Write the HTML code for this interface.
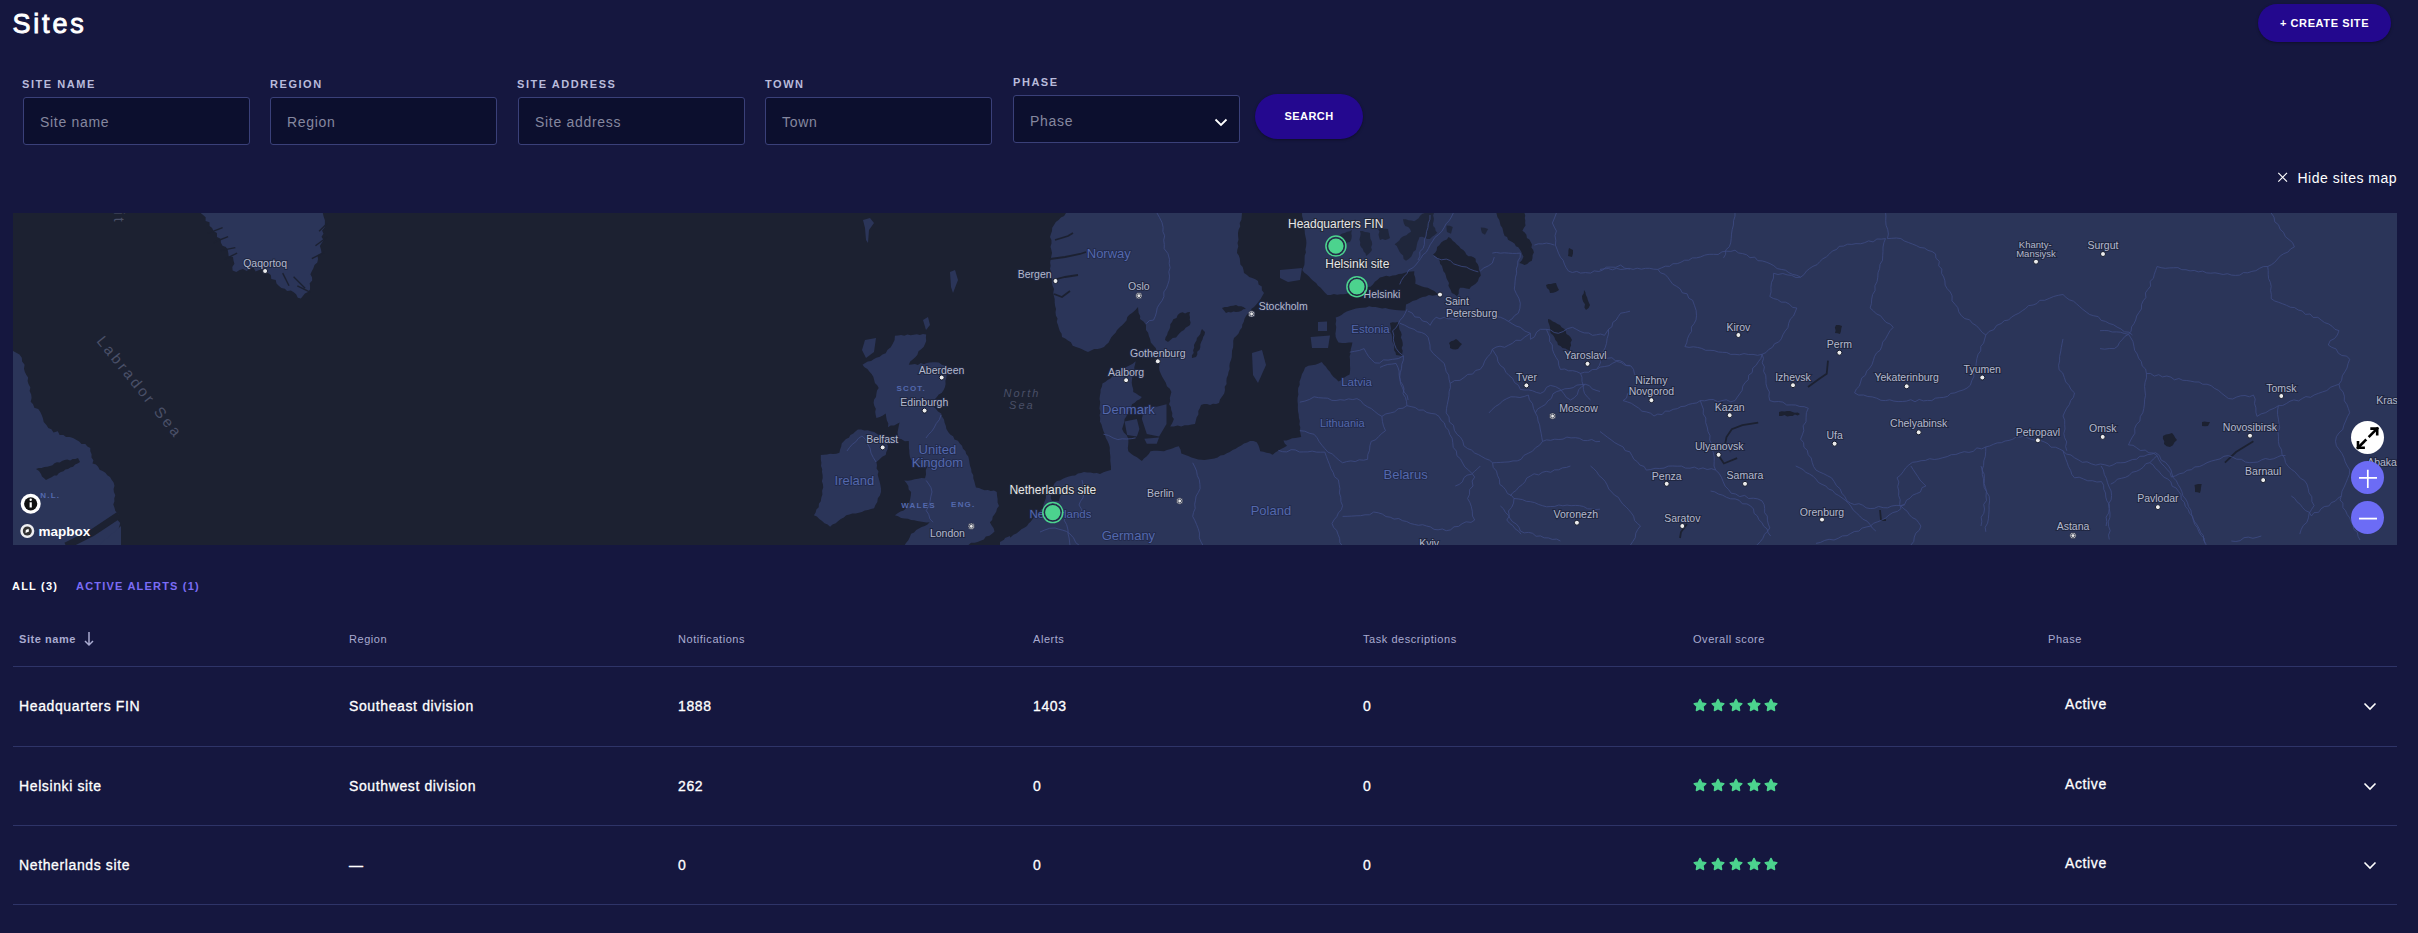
<!DOCTYPE html>
<html><head><meta charset="utf-8">
<style>
*{box-sizing:border-box;margin:0;padding:0}
html,body{width:2418px;height:933px;overflow:hidden;background:#15173f;font-family:"Liberation Sans",sans-serif;color:#fff}
.abs{position:absolute}
h1{position:absolute;left:12.5px;top:8.5px;font-size:27px;font-weight:normal;-webkit-text-stroke:0.9px #fff;letter-spacing:2.8px;color:#fff}
.create{position:absolute;left:2258px;top:4px;width:133px;height:38px;border-radius:19px;background:#23088e;color:#fff;font-size:11px;font-weight:bold;letter-spacing:0.6px;text-align:center;line-height:38px;box-shadow:0 1px 3px rgba(0,0,0,.35)}
.lbl{position:absolute;font-size:11px;font-weight:bold;letter-spacing:1.55px;color:#b9bbdb;top:78px}
.inp{position:absolute;top:97px;width:227px;height:48px;border:1px solid #3a4079;border-radius:3px;background:#0c0f2e;color:#85879f;font-size:14px;letter-spacing:0.7px;padding-left:16px;padding-top:1px;line-height:46px}
.search{position:absolute;left:1255px;top:94px;width:108px;height:45px;border-radius:23px;background:#24088f;color:#fff;font-size:11px;font-weight:bold;letter-spacing:0.45px;text-align:center;line-height:45px;box-shadow:0 1px 3px rgba(0,0,0,.35)}
.hide{position:absolute;left:2297.5px;top:169.5px;font-size:14px;letter-spacing:0.5px;color:#fff}
.map{position:absolute;left:13px;top:213px;width:2384px;height:332px;background:#1c2131;overflow:hidden}
.tab{position:absolute;top:580px;font-size:11px;font-weight:bold;letter-spacing:1.2px}
.th{position:absolute;top:633px;font-size:11px;color:#a9abd0;letter-spacing:0.55px}
.hr{position:absolute;left:13px;width:2384px;height:1px;background:#2e3468}
.mapsvg{position:absolute;left:0;top:0}
.city{font-size:10.5px;fill:#b4b9cd;text-anchor:middle}
.city.sm{font-size:9.5px}
.ctry{fill:#5469ad;text-anchor:middle}
.reg{font-size:8px;font-weight:bold;letter-spacing:1.2px;fill:#5469ad;text-anchor:middle}
.sea{font-size:11px;font-style:italic;letter-spacing:2px;fill:#4a5068;text-anchor:middle}
.sea.big{font-size:15px;font-style:normal;letter-spacing:3px}
.mk{font-size:12px;fill:#e6e6e6;text-anchor:middle}
.stars{position:absolute;display:flex}
.chev{position:absolute}
.td{position:absolute;font-size:14px;color:#fff;letter-spacing:0.62px;margin-top:1.3px;-webkit-text-stroke:0.3px #fff}
</style></head><body>
<h1>Sites</h1>
<div class="create">+ CREATE SITE</div>

<div class="lbl" style="left:22px">SITE NAME</div>
<div class="lbl" style="left:270px">REGION</div>
<div class="lbl" style="left:517px">SITE ADDRESS</div>
<div class="lbl" style="left:765px">TOWN</div>
<div class="lbl" style="left:1013px;top:76px">PHASE</div>
<div class="inp" style="left:23px">Site name</div>
<div class="inp" style="left:270px">Region</div>
<div class="inp" style="left:518px">Site address</div>
<div class="inp" style="left:765px">Town</div>
<div class="inp" style="left:1013px;top:95px;padding-top:2px">Phase</div>
<svg class="chev" style="left:1214px;top:117.5px" width="14" height="9" viewBox="0 0 14 9"><path d="M1.5 1.5 L7 7 L12.5 1.5" fill="none" stroke="#fff" stroke-width="1.8"/></svg>
<div class="search">SEARCH</div>

<svg class="chev" style="left:2276px;top:171px" width="12" height="12" viewBox="0 0 12 12"><path d="M2.3 1.9 L11 10.6 M11 1.9 L2.3 10.6" stroke="#fff" stroke-width="1.15"/></svg>
<div class="hide">Hide sites map</div>

<div class="map"></div>
<svg class="mapsvg" width="2418" height="933" viewBox="0 0 2418 933">
<defs><clipPath id="mc"><rect x="13" y="213" width="2384" height="332"/></clipPath></defs>
<g clip-path="url(#mc)">
<rect x="13" y="213" width="2384" height="332" fill="#1c2131"/>
<polygon points="200.7,213.0 203.1,215.1 205.6,217.3 205.6,221.1 209.5,222.2 209.6,225.9 212.1,228.1 213.4,231.0 216.9,232.9 217.0,236.9 220.6,238.8 220.9,242.7 222.5,245.8 225.8,247.1 227.6,249.6 228.3,252.9 228.7,256.4 233.0,257.0 233.5,260.4 234.4,263.8 232.3,267.0 232.6,270.4 236.3,272.0 239.6,270.0 242.9,268.9 246.7,271.0 249.9,268.6 253.4,267.4 255.6,271.6 259.2,269.9 262.3,270.0 265.4,270.6 268.0,273.0 270.8,275.1 271.3,279.1 275.7,279.9 276.5,283.6 279.0,286.0 281.4,288.1 284.8,288.7 287.1,290.9 290.9,290.6 293.7,292.2 296.1,294.3 297.8,297.7 300.9,298.6 302.9,296.1 304.9,293.5 308.0,292.0 310.0,289.5 310.1,286.4 309.7,283.3 312.2,280.5 312.1,277.5 310.4,274.2 311.8,271.3 313.4,268.3 314.5,265.1 317.3,262.6 318.0,259.2 317.5,255.3 321.6,253.3 321.0,249.4 319.9,246.0 321.7,243.1 323.7,240.2 321.5,236.7 323.5,233.8 322.1,230.4 324.6,227.6 324.9,223.9 324.9,220.2 323.6,216.6 322.8,213.0 200.7,213.0" fill="#2b3559"/>
<polygon points="13.0,351.0 16.3,352.8 19.5,354.6 21.8,357.7 22.1,361.5 24.6,364.8 24.0,368.7 24.8,371.8 26.2,374.7 28.1,377.5 27.6,380.9 28.5,384.0 30.4,387.4 29.6,391.1 31.2,394.5 31.6,398.1 30.7,401.8 33.1,404.3 34.3,407.7 38.2,408.9 40.2,411.8 41.7,415.0 43.0,418.4 43.7,422.1 46.4,424.9 48.3,428.0 51.4,429.2 53.5,432.4 57.8,431.2 59.6,435.0 63.4,434.9 66.0,437.0 69.7,437.0 73.0,438.1 76.1,439.8 79.2,441.5 81.5,444.0 85.3,443.9 87.4,446.6 90.3,448.0 90.3,451.2 91.6,454.2 91.5,457.4 93.4,460.3 92.5,463.6 95.9,464.4 98.1,466.7 99.6,469.8 102.6,471.1 105.4,472.7 107.3,475.3 110.0,477.0 111.6,479.8 113.6,482.5 114.5,485.7 113.6,488.9 113.9,492.0 115.3,495.2 114.3,498.3 114.4,501.5 113.3,504.6 114.5,507.8 115.3,511.1 118.1,513.4 119.0,516.6 117.5,519.9 120.2,523.1 119.3,526.4 118.2,529.7 120.1,532.9 119.0,536.2 120.5,539.5 118.5,542.7 119.0,546.0 13.0,546.0 13.0,351.0" fill="#2b3559"/>
<polygon points="894.9,335.8 898.0,335.4 901.1,334.9 904.3,335.7 907.4,334.6 910.6,335.3 913.7,334.8 916.8,334.2 919.9,334.9 923.0,333.9 926.2,334.6 925.9,337.7 926.2,340.9 925.0,343.9 923.6,347.0 921.1,349.2 918.5,351.3 917.4,354.7 915.3,357.2 912.7,359.4 910.2,361.6 908.8,364.7 911.8,364.6 914.8,364.1 917.9,364.9 920.8,363.0 923.9,364.2 926.8,362.9 929.8,362.5 932.8,362.2 935.9,362.3 938.9,362.4 941.7,364.8 945.4,365.8 948.2,368.2 947.4,371.3 946.6,374.4 946.4,377.7 945.4,380.8 945.6,384.1 944.9,387.2 943.5,390.2 941.6,392.9 938.7,394.6 936.7,397.2 934.5,399.6 931.9,401.6 929.7,404.0 932.6,406.3 935.7,408.4 938.0,411.5 941.2,413.4 942.0,416.6 944.0,419.4 944.6,422.7 945.8,425.7 946.4,429.1 948.2,431.9 950.2,434.5 953.1,436.3 954.5,439.5 957.9,440.7 959.8,443.4 962.0,445.8 963.0,448.8 965.4,451.1 966.2,454.1 968.3,456.5 969.0,459.7 969.5,462.9 970.1,466.0 971.2,469.0 971.5,472.2 973.2,475.0 973.3,478.3 974.3,481.3 975.1,484.4 976.0,487.4 979.0,488.0 981.8,489.3 984.7,490.2 987.9,490.0 990.8,491.0 994.0,490.6 996.8,492.0 997.0,495.6 997.6,499.0 997.6,502.6 999.0,506.0 997.0,508.4 996.3,511.6 994.6,514.2 992.7,516.7 992.2,519.9 989.9,522.2 991.5,525.2 993.5,528.1 994.5,531.4 992.1,533.8 989.4,535.8 985.9,536.6 983.8,539.4 980.6,540.7 977.6,542.0 974.5,542.7 971.1,542.7 968.4,545.0 965.1,545.2 962.0,546.0 904.2,546.0 906.0,543.0 908.3,540.2 909.9,537.1 911.1,533.7 914.1,532.6 916.2,530.1 919.0,528.6 921.6,526.9 924.7,526.1 927.5,524.5 929.7,522.2 926.5,522.4 923.4,522.0 920.3,521.5 917.2,521.1 914.2,520.3 911.1,519.9 907.9,518.8 904.5,518.4 901.1,517.9 898.1,516.3 894.9,515.2 897.6,513.2 900.5,511.6 903.7,510.4 906.2,508.1 908.8,506.0 909.4,502.5 910.2,499.0 910.8,495.6 911.1,492.0 908.7,489.5 908.3,485.9 906.4,483.1 904.2,480.5 907.7,480.8 911.2,480.3 914.6,479.2 918.0,478.8 921.5,477.9 925.0,478.2 926.0,474.4 925.8,470.3 927.3,466.6 923.8,465.9 920.6,464.3 917.3,463.0 914.2,461.3 911.1,459.7 909.9,456.7 909.4,453.6 909.3,450.5 908.9,447.4 908.9,444.2 908.8,441.1 904.8,441.2 901.2,438.9 897.2,438.8 897.9,435.6 897.5,432.2 898.2,429.0 898.8,425.8 899.6,422.6 896.8,424.0 894.1,425.5 890.7,425.5 888.0,427.2 888.3,423.6 886.8,420.3 886.2,416.9 885.7,413.4 882.9,415.6 879.8,417.1 876.4,418.0 875.7,415.0 875.2,411.9 875.8,408.7 874.3,405.7 873.6,402.7 874.1,399.5 876.0,396.9 876.4,393.7 877.0,390.6 878.7,387.9 877.2,385.2 874.9,382.9 874.1,379.8 873.3,376.7 871.6,374.1 869.5,371.7 867.4,369.1 864.5,367.3 862.5,364.7 865.2,363.1 867.8,361.4 871.1,361.0 873.6,359.2 876.4,357.8 879.7,356.7 882.5,354.5 885.7,353.2 887.6,349.8 890.8,347.3 892.6,343.9 894.6,340.1 894.9,335.8" fill="#2b3559"/>
<polygon points="865.0,340.0 876.0,338.0 874.0,352.0 866.0,358.0 862.0,350.0" fill="#2b3559"/>
<polygon points="841.7,443.4 843.8,441.2 846.0,439.0 848.8,437.7 850.5,435.0 853.3,433.6 855.4,431.4 857.9,429.6 861.2,429.4 864.4,430.5 867.7,430.2 870.9,431.3 874.1,431.9 876.9,433.7 879.2,436.1 881.1,438.8 883.0,441.5 886.1,443.1 888.0,445.8 887.7,449.0 886.3,451.9 885.7,455.0 882.2,456.8 879.4,459.6 876.4,462.0 877.0,465.2 876.6,468.6 878.5,471.6 877.7,475.0 878.7,478.2 879.6,481.6 880.4,485.0 881.0,488.4 881.0,492.0 879.9,495.4 877.8,498.3 877.3,502.0 875.4,505.0 874.1,508.3 871.0,508.9 868.0,510.0 864.8,510.5 861.9,512.0 858.8,512.8 855.7,513.4 852.4,513.4 849.4,514.5 846.3,515.2 843.8,517.4 840.8,519.0 838.2,521.1 835.7,523.2 832.5,524.5 830.1,526.8 827.6,524.6 824.5,523.3 822.1,520.9 819.3,519.0 816.9,516.6 813.9,515.2 815.6,512.6 816.4,509.5 818.7,507.2 818.9,503.8 820.8,501.3 821.3,497.8 822.4,494.4 822.1,490.8 823.2,487.4 822.9,484.3 821.9,481.3 822.7,478.1 822.6,475.1 822.0,472.0 822.2,468.9 821.0,465.9 821.4,462.8 820.8,459.7 820.8,455.0 823.9,454.8 827.0,454.4 830.1,453.8 833.3,454.0 836.4,453.8 839.4,452.7 840.1,449.6 841.2,446.6 841.7,443.4" fill="#2b3559"/>
<polygon points="98.0,546.0 121.0,526.0 121.0,546.0" fill="#2b3559"/>
<polygon points="863.0,220.0 870.0,218.0 874.0,223.0 869.0,230.0 868.0,243.0 866.0,240.0 865.0,228.0" fill="#2b3559"/>
<polygon points="950.0,272.0 955.0,270.0 958.0,280.0 953.0,293.0 951.0,287.0" fill="#2b3559"/>
<polygon points="923.0,320.0 928.0,317.0 930.0,325.0 926.0,330.0" fill="#2b3559"/>
<polygon points="1001.0,546.0 1005.0,538.0 1010.0,536.0 1010.0,546.0" fill="#2b3559"/>
<polygon points="1066.0,213.0 1242.0,213.0 1241.7,216.4 1241.4,219.8 1239.7,222.9 1240.2,226.5 1238.6,229.7 1238.0,233.0 1238.1,236.3 1238.5,239.7 1237.5,243.0 1238.3,246.4 1237.3,249.7 1237.0,253.0 1238.8,255.6 1239.8,258.4 1240.1,261.5 1240.4,264.6 1242.7,267.0 1243.5,270.0 1244.0,273.0 1246.7,274.8 1249.2,277.0 1252.3,277.9 1255.3,279.2 1258.0,281.0 1258.6,284.4 1261.8,286.6 1261.9,290.3 1264.0,293.0 1262.3,296.0 1260.6,299.0 1258.6,301.8 1256.3,304.4 1254.0,307.0 1251.5,308.8 1250.5,311.9 1247.9,313.6 1246.0,316.0 1244.5,318.7 1243.8,321.7 1242.3,324.4 1242.0,327.5 1240.0,330.0 1238.7,333.2 1236.5,335.7 1234.0,338.0 1233.2,341.1 1233.3,344.3 1233.1,347.5 1232.1,350.5 1231.9,353.7 1231.8,356.9 1231.0,360.0 1229.8,362.9 1229.4,365.9 1229.7,369.1 1228.5,372.0 1228.0,375.0 1226.7,377.9 1226.4,380.9 1226.6,384.1 1224.7,386.8 1225.0,390.0 1224.2,393.6 1222.1,396.6 1220.0,399.5 1219.0,403.0 1216.1,404.0 1213.0,403.7 1210.1,404.9 1207.0,404.0 1203.9,404.1 1201.0,405.0 1199.9,408.1 1198.3,411.1 1198.4,414.6 1196.6,417.5 1195.8,420.8 1195.0,424.0 1191.5,424.5 1188.2,425.3 1184.6,425.2 1181.3,426.5 1177.6,425.6 1173.9,426.6 1170.2,426.5 1172.3,422.9 1173.9,419.1 1172.1,416.4 1172.3,413.1 1171.2,410.1 1170.9,407.0 1169.0,404.3 1170.2,401.3 1169.8,398.1 1170.6,395.0 1171.4,392.0 1169.8,388.8 1166.9,386.3 1165.8,382.8 1164.0,379.7 1162.2,376.8 1160.8,373.8 1159.5,370.7 1159.1,367.3 1159.6,364.2 1158.4,361.1 1158.6,358.1 1159.1,355.0 1156.9,351.8 1155.7,347.9 1153.0,345.0 1150.8,342.4 1150.1,339.0 1148.9,336.0 1148.1,332.7 1146.0,330.0 1146.0,325.0 1143.5,321.5 1140.0,319.0 1140.2,315.9 1138.6,313.1 1138.3,310.0 1138.0,307.0 1135.2,310.2 1132.0,313.0 1129.4,314.8 1127.3,317.1 1126.5,320.5 1124.5,322.8 1122.4,325.0 1120.0,327.0 1117.0,330.0 1115.6,332.8 1113.3,334.9 1111.3,337.2 1109.9,340.0 1108.5,342.7 1106.0,344.7 1104.0,347.0 1100.9,348.2 1097.6,348.9 1094.1,349.1 1091.1,350.6 1088.0,352.0 1085.0,350.7 1082.1,349.3 1079.1,347.9 1076.0,347.0 1072.7,345.7 1070.9,342.3 1067.9,340.5 1065.2,338.4 1062.0,337.0 1061.6,333.8 1059.8,331.1 1058.8,328.1 1058.0,325.0 1056.8,321.9 1057.5,318.6 1055.9,315.5 1055.5,312.3 1056.0,309.0 1055.1,305.7 1054.7,302.4 1054.7,299.0 1053.8,295.8 1053.3,292.4 1054.0,289.0 1052.6,285.8 1051.9,282.5 1051.7,279.1 1050.4,275.9 1051.4,272.2 1050.0,269.0 1050.6,265.8 1050.1,262.5 1050.7,259.3 1051.3,256.2 1052.0,253.0 1051.3,249.8 1050.5,246.7 1051.5,243.3 1051.4,240.1 1050.0,237.0 1050.9,234.0 1052.0,231.0 1052.2,227.7 1054.0,225.0 1055.8,222.0 1058.6,220.0 1060.9,217.5 1064.1,215.9 1066.0,213.0" fill="#2b3559"/>
<polygon points="1302.0,213.0 2397.0,213.0 2397.0,546.0 1000.0,546.0 1000.0,542.0 1002.7,540.6 1005.3,539.1 1008.3,538.4 1011.0,537.0 1013.4,534.7 1016.4,533.4 1018.9,531.4 1021.4,529.2 1024.3,527.8 1027.0,526.0 1028.6,523.4 1030.9,521.4 1032.6,518.9 1034.6,516.7 1036.9,514.7 1039.3,512.8 1040.7,510.0 1043.0,508.0 1043.4,504.7 1044.6,501.5 1045.8,498.4 1046.0,495.0 1048.3,492.3 1050.3,489.3 1053.0,487.0 1054.4,483.5 1057.0,481.0 1060.1,480.4 1062.9,478.8 1065.9,477.6 1068.9,476.6 1071.9,475.8 1075.1,475.4 1077.9,473.6 1081.0,473.1 1084.0,472.0 1087.2,472.6 1090.4,472.6 1093.6,473.3 1096.9,473.1 1100.0,474.0 1103.5,472.2 1107.2,471.0 1111.0,470.0 1111.0,466.8 1110.6,463.6 1110.3,460.4 1110.4,457.1 1110.1,453.9 1109.7,450.7 1109.8,447.5 1108.9,444.2 1107.5,441.0 1105.8,438.0 1104.9,434.6 1103.6,431.4 1102.4,428.1 1101.6,424.7 1099.9,421.6 1100.2,418.4 1099.6,415.1 1100.5,411.9 1099.4,408.6 1099.8,405.4 1100.2,402.2 1099.5,398.9 1099.9,395.7 1100.5,392.6 1100.6,389.4 1102.0,386.5 1102.4,383.4 1105.2,381.9 1107.6,379.9 1110.5,378.4 1112.7,376.1 1115.5,374.6 1118.1,372.8 1120.7,371.0 1123.2,369.0 1125.8,367.3 1129.3,365.6 1132.7,363.7 1135.7,361.2 1135.1,364.3 1134.3,367.3 1134.4,370.6 1133.0,373.5 1132.4,376.6 1132.0,379.7 1131.7,382.8 1132.2,385.9 1133.2,388.9 1133.2,392.0 1136.2,393.5 1138.9,395.4 1141.9,396.9 1139.8,399.2 1137.0,400.6 1134.7,402.8 1132.0,404.3 1130.9,407.5 1129.5,410.5 1127.3,413.0 1126.5,416.3 1124.6,419.1 1124.1,422.5 1123.1,425.7 1122.1,429.0 1123.8,432.5 1126.7,435.3 1128.3,438.8 1128.4,441.9 1128.2,445.0 1127.8,448.1 1128.3,451.2 1130.8,453.5 1133.5,455.5 1136.6,456.9 1139.2,459.0 1141.9,461.0 1143.9,458.4 1146.5,456.4 1148.8,454.0 1150.5,451.2 1153.9,450.8 1157.2,450.8 1160.6,450.9 1164.0,451.2 1166.9,449.9 1169.9,449.2 1172.9,448.3 1175.7,446.9 1178.8,446.2 1180.6,449.7 1181.3,453.6 1184.8,454.8 1188.2,456.0 1191.5,457.4 1195.0,458.6 1198.1,459.6 1201.4,459.8 1204.6,460.0 1207.9,459.4 1211.1,458.9 1214.4,458.4 1217.6,457.6 1220.4,455.6 1223.8,455.0 1226.8,453.3 1229.8,451.9 1232.6,450.0 1235.7,448.8 1238.3,446.9 1241.2,445.4 1244.0,443.6 1247.2,442.6 1250.0,441.0 1253.5,441.1 1256.7,442.3 1258.3,445.1 1259.4,448.1 1260.2,451.2 1263.4,451.7 1266.5,452.8 1269.7,453.3 1272.7,454.7 1275.2,452.4 1278.2,450.8 1281.0,449.0 1284.1,447.4 1287.0,445.8 1284.7,443.5 1283.4,440.5 1286.5,440.4 1289.4,439.5 1292.2,438.3 1295.2,437.9 1298.2,437.4 1301.2,437.0 1300.6,433.9 1299.9,430.8 1300.3,427.6 1299.4,424.5 1299.8,421.1 1298.9,417.8 1298.7,414.5 1298.0,411.2 1297.8,407.8 1297.9,404.5 1297.5,401.2 1297.6,397.8 1298.4,394.6 1298.0,391.2 1298.2,387.9 1299.7,384.7 1299.5,381.4 1300.9,377.9 1301.9,374.3 1303.7,371.0 1305.1,367.5 1308.3,365.8 1311.8,365.3 1315.3,364.7 1318.6,363.4 1321.8,361.9 1323.6,364.6 1325.9,366.8 1327.7,369.4 1329.9,371.7 1331.5,374.5 1333.6,377.0 1336.1,379.1 1338.5,381.4 1341.5,380.0 1343.9,377.8 1346.6,375.9 1349.6,374.5 1350.0,371.5 1350.2,368.5 1350.0,365.4 1350.0,362.4 1350.0,359.4 1349.6,356.4 1350.6,353.0 1350.7,349.3 1351.7,345.9 1352.4,342.4 1348.9,342.6 1345.5,343.0 1342.0,343.0 1338.5,342.4 1336.9,339.8 1335.7,336.9 1335.4,333.6 1335.9,330.4 1336.2,327.1 1335.6,323.9 1336.2,320.6 1335.7,317.4 1338.7,316.5 1341.5,315.1 1344.0,313.1 1346.7,311.5 1349.6,310.4 1352.8,309.4 1356.0,308.6 1359.3,308.0 1362.6,307.7 1366.0,307.4 1369.1,306.2 1372.3,307.1 1375.6,307.1 1378.9,307.8 1382.1,308.4 1385.5,308.0 1388.7,309.0 1392.0,309.5 1395.3,310.1 1398.7,310.2 1402.0,310.4 1405.4,310.4 1406.0,304.5 1409.4,302.9 1412.6,301.0 1416.3,300.1 1419.5,298.2 1422.6,297.0 1425.9,296.5 1428.9,295.1 1432.7,295.7 1436.5,295.0 1440.3,295.1 1437.1,293.4 1434.3,291.0 1431.1,289.4 1427.8,287.8 1424.6,287.2 1421.4,286.2 1418.3,285.1 1415.3,283.7 1415.5,280.5 1415.2,277.4 1414.1,274.4 1414.3,271.2 1411.1,271.4 1408.0,271.8 1404.9,272.8 1401.9,273.8 1398.7,274.1 1395.7,275.2 1392.5,275.4 1389.5,276.5 1386.2,275.8 1383.1,276.7 1380.0,277.4 1377.6,279.7 1374.9,281.7 1372.9,284.4 1370.5,286.7 1367.4,287.1 1364.5,288.1 1361.7,289.7 1358.8,290.5 1355.8,291.3 1352.9,292.2 1349.8,292.7 1346.9,293.7 1343.7,294.2 1340.4,294.2 1337.2,294.8 1333.9,294.1 1330.7,295.0 1327.4,295.0 1325.0,292.7 1322.8,290.3 1320.7,287.7 1318.0,285.8 1316.1,283.1 1313.4,281.1 1311.2,278.9 1309.0,276.6 1306.8,274.4 1304.1,272.6 1302.3,270.0 1304.4,265.1 1304.6,262.0 1304.6,258.8 1304.7,255.6 1305.9,252.6 1305.4,249.4 1306.1,246.2 1306.4,243.1 1306.2,240.1 1305.6,237.1 1304.9,234.1 1304.7,231.1 1304.3,228.0 1304.1,225.0 1302.9,222.1 1303.0,219.0 1302.1,216.1 1302.0,213.0" fill="#2b3559"/>
<polygon points="1144.3,406.8 1156.7,406.8 1166.5,404.3 1166.5,424.0 1159.1,436.4 1146.8,433.9 1141.9,419.1" fill="#2b3559"/>
<polygon points="1144.3,438.8 1159.1,437.6 1156.7,443.8 1146.8,443.8" fill="#2b3559"/>
<polygon points="1124.6,421.6 1136.9,419.1 1139.4,429.0 1136.9,436.4 1127.1,435.1" fill="#2b3559"/>
<polygon points="1252.0,353.0 1262.0,350.0 1266.0,365.0 1258.0,383.0 1253.0,375.0" fill="#2b3559"/>
<polygon points="1310.6,337.0 1330.0,335.5 1328.0,348.0 1312.0,348.0" fill="#2b3559"/>
<polygon points="1318.0,322.0 1327.0,321.5 1327.0,331.0 1318.0,331.0" fill="#2b3559"/>
<polygon points="1280.0,270.0 1302.0,268.0 1300.0,280.0 1288.0,282.0 1280.0,278.0" fill="#2b3559"/>
<polygon points="36.0,469.0 38.7,467.9 41.6,467.9 44.4,467.0 47.2,466.8 50.0,466.0 52.5,465.2 54.5,463.3 56.9,462.2 59.8,462.6 62.0,461.0 64.6,460.1 67.2,459.5 70.2,460.4 72.7,458.9 75.4,459.1 78.0,458.0 80.0,462.0 77.6,463.4 75.1,464.6 73.1,466.7 70.3,467.4 68.0,469.0 65.4,469.6 63.4,471.2 60.9,472.0 58.7,473.3 56.9,475.4 54.1,475.4 52.0,477.0 48.9,478.4 46.0,480.0 44.1,478.2 42.0,476.5 41.0,474.0 39.0,471.0 36.0,469.0" fill="#1c2131"/>
<polygon points="1051.0,495.0 1053.5,494.3 1056.0,494.6 1058.5,494.0 1061.0,494.0 1059.8,497.4 1059.0,501.0 1055.5,500.8 1052.0,501.0 1050.7,498.1 1051.0,495.0" fill="#1c2131"/>
<polygon points="1165.0,340.0 1165.6,337.3 1167.1,334.9 1167.8,332.2 1169.2,329.8 1170.2,327.2 1170.3,324.3 1172.0,322.0 1173.3,319.2 1176.5,317.9 1177.7,315.0 1180.0,313.0 1182.5,312.3 1185.1,313.4 1187.5,312.2 1190.0,312.0 1189.4,314.6 1190.0,317.2 1189.7,319.8 1190.6,322.4 1190.0,325.0 1187.8,326.5 1185.6,327.8 1184.0,330.0 1181.7,331.3 1179.8,333.1 1178.0,335.0 1176.0,337.4 1172.7,338.1 1170.4,340.1 1168.0,342.0 1165.0,340.0" fill="#1c2131"/>
<polygon points="1202.0,329.0 1205.0,332.0 1204.5,334.7 1203.1,337.0 1202.5,339.6 1201.2,341.9 1200.3,344.4 1200.3,347.3 1199.5,349.8 1197.2,351.8 1197.3,354.6 1196.0,357.0 1192.0,358.0 1191.9,355.3 1193.7,352.9 1193.1,350.2 1194.2,347.7 1194.0,345.0 1195.1,342.7 1196.5,340.5 1196.9,337.9 1198.8,336.0 1200.3,333.9 1200.9,331.3 1202.0,329.0" fill="#1c2131"/>
<polygon points="1222.0,308.0 1224.7,306.9 1227.6,306.9 1230.4,306.0 1233.2,305.8 1236.0,305.0 1238.4,306.2 1241.3,306.3 1243.8,307.2 1246.0,309.0 1243.3,309.2 1241.1,310.9 1238.6,311.7 1236.0,312.0 1233.4,311.4 1231.0,312.6 1228.4,312.1 1226.0,313.0 1224.0,310.5 1222.0,308.0" fill="#1c2131"/>
<polygon points="1448.6,236.9 1451.0,238.4 1452.7,240.7 1455.0,242.4 1456.8,244.6 1459.0,246.3 1460.7,248.5 1463.2,249.9 1465.1,251.9 1466.3,254.6 1468.4,256.2 1471.1,256.3 1473.5,257.2 1475.6,258.7 1475.8,261.8 1477.8,264.3 1478.8,267.1 1478.9,270.0 1480.2,272.6 1480.8,275.4 1478.9,278.0 1477.9,281.3 1475.6,283.7 1473.4,285.2 1471.0,286.7 1469.4,288.9 1466.3,288.5 1463.2,287.7 1460.0,287.8 1458.7,290.5 1458.7,293.7 1456.9,296.2 1454.5,294.2 1451.7,293.0 1451.0,290.5 1449.7,288.2 1448.4,285.8 1449.0,282.9 1447.6,280.6 1446.5,278.3 1445.9,275.7 1445.1,273.3 1443.4,271.2 1442.7,268.6 1442.0,265.9 1440.1,263.8 1439.7,261.0 1438.2,258.7 1435.5,256.7 1433.0,254.6 1435.2,252.7 1436.7,250.3 1437.1,247.1 1439.3,245.2 1441.2,242.6 1443.6,240.7 1446.8,239.6 1448.6,236.9" fill="#1c2131"/>
<polygon points="1496.4,213.0 1524.5,213.0 1525.2,215.5 1524.8,218.0 1525.3,220.5 1525.1,223.0 1525.5,225.5 1523.8,228.0 1522.4,230.7 1524.7,232.5 1526.4,234.7 1526.9,237.9 1529.4,239.6 1530.7,242.1 1532.0,244.6 1531.4,247.6 1533.2,249.9 1533.9,252.5 1532.6,255.1 1532.5,258.0 1531.8,260.8 1529.2,262.0 1527.2,264.1 1524.5,265.0 1522.0,263.7 1519.3,262.9 1521.9,260.2 1523.5,256.7 1522.2,254.3 1521.3,251.8 1519.9,249.5 1518.3,247.3 1515.9,246.3 1514.7,243.7 1512.6,242.3 1510.3,241.1 1508.0,239.8 1507.1,237.0 1504.7,235.9 1503.6,233.3 1503.0,230.6 1502.3,227.8 1500.6,225.5 1499.9,222.6 1499.2,219.7 1497.5,217.2 1496.4,213.0" fill="#1c2131"/>
<polygon points="1390.0,323.0 1392.6,322.2 1395.3,322.4 1398.0,322.0 1398.8,324.5 1399.0,327.2 1399.5,329.8 1401.0,332.1 1401.7,334.7 1400.8,337.6 1402.0,340.0 1402.6,342.6 1402.8,345.3 1401.6,348.1 1402.7,350.7 1402.2,353.4 1403.0,356.0 1399.5,355.5 1396.0,355.0 1395.6,352.4 1394.1,350.2 1394.2,347.4 1394.0,344.8 1392.7,342.5 1392.0,340.0 1392.1,337.1 1391.6,334.3 1390.2,331.6 1391.1,328.6 1390.5,325.8 1390.0,323.0" fill="#1c2131"/>
<polygon points="1548.0,319.0 1550.6,319.8 1552.8,321.5 1555.3,322.4 1557.5,324.0 1560.0,325.0 1561.5,327.3 1564.0,328.8 1565.8,330.9 1566.4,334.0 1568.9,335.4 1570.7,337.6 1572.0,340.0 1570.6,342.6 1571.1,345.5 1569.9,348.1 1570.0,351.0 1567.6,349.8 1565.3,348.4 1562.5,348.0 1560.5,346.0 1558.0,345.0 1557.3,342.2 1555.4,340.0 1554.4,337.3 1552.9,334.9 1550.6,332.9 1550.0,330.0 1550.0,327.2 1549.2,324.5 1548.1,321.8 1548.0,319.0" fill="#1c2131"/>
<polygon points="1402.9,219.2 1405.8,219.3 1408.6,220.3 1411.5,220.5 1414.3,221.3 1416.5,219.8 1418.6,218.2 1420.1,215.7 1422.1,214.0 1424.7,213.0 1434.0,213.0 1433.1,215.5 1433.9,218.2 1433.7,220.8 1433.0,223.4 1433.2,226.1 1435.1,228.1 1435.6,230.7 1437.2,232.8 1434.8,234.9 1432.2,236.7 1429.9,239.0 1427.2,239.1 1424.7,237.7 1422.2,236.8 1419.5,236.9 1418.7,239.5 1417.5,242.0 1416.9,244.6 1416.4,247.3 1415.8,250.0 1413.4,251.8 1412.4,254.3 1411.2,256.7 1408.8,259.0 1406.0,260.8 1403.6,258.9 1403.1,255.6 1400.8,253.5 1399.2,251.2 1398.0,248.6 1396.7,246.1 1394.6,244.2 1396.9,242.4 1399.3,240.6 1400.8,238.0 1403.3,236.3 1406.3,235.3 1408.5,233.2 1411.2,231.7 1410.0,229.1 1408.1,227.1 1405.2,226.0 1403.9,223.4 1402.9,219.2" fill="#1c2131" fill-opacity="0.75"/>
<polygon points="1446.5,225.5 1449.8,225.8 1452.8,227.0 1451.8,230.4 1451.0,233.8 1447.0,232.0 1446.5,228.8 1446.5,225.5" fill="#1c2131" fill-opacity="0.75"/>
<polygon points="1480.8,227.6 1484.5,227.8 1488.1,229.0 1486.5,231.9 1485.0,234.8 1482.0,233.0 1481.2,230.4 1480.8,227.6" fill="#1c2131" fill-opacity="0.75"/>
<polygon points="1360.0,231.0 1362.6,231.0 1365.0,232.1 1367.5,232.3 1370.0,233.0 1370.1,235.9 1370.4,238.7 1371.8,241.4 1372.2,244.2 1371.1,247.2 1372.0,250.0 1370.3,252.3 1368.3,254.3 1366.0,256.0 1365.6,253.4 1363.6,251.6 1362.9,249.1 1361.2,247.2 1360.0,245.0 1360.3,242.2 1359.4,239.4 1360.2,236.6 1360.7,233.8 1360.0,231.0" fill="#1c2131" fill-opacity="0.75"/>
<polygon points="1378.0,229.0 1380.5,228.5 1383.0,229.1 1385.5,228.8 1388.0,229.0 1388.5,232.0 1389.1,235.0 1390.0,238.0 1387.7,239.3 1385.2,239.9 1382.4,238.9 1380.0,240.0 1379.1,237.3 1378.5,234.6 1379.4,231.6 1378.0,229.0" fill="#1c2131" fill-opacity="0.75"/>
<polygon points="1340.0,235.0 1342.2,233.6 1344.8,233.1 1347.1,231.8 1349.7,231.2 1352.0,230.0 1351.3,233.0 1351.8,236.1 1351.4,239.1 1350.0,242.0 1347.1,242.4 1344.8,244.4 1342.0,245.0 1341.0,242.6 1341.9,239.8 1340.4,237.5 1340.0,235.0" fill="#1c2131" fill-opacity="0.75"/>
<polygon points="1546.0,285.0 1548.4,284.0 1551.0,284.1 1553.5,283.3 1556.0,283.0 1556.8,285.4 1557.8,287.8 1559.0,290.0 1556.2,291.7 1553.3,292.8 1550.0,293.0 1549.2,290.1 1546.9,287.9 1546.0,285.0" fill="#1c2131"/>
<polygon points="1569.0,248.0 1573.0,250.0 1573.0,253.6 1572.0,257.0 1568.0,256.0 1568.4,253.3 1568.4,250.6 1569.0,248.0" fill="#1c2131"/>
<polygon points="1584.0,290.0 1585.4,292.3 1585.9,295.0 1587.2,297.4 1587.8,300.1 1588.8,302.6 1590.0,305.0 1588.6,308.0 1586.0,310.0 1584.4,307.4 1585.0,304.2 1583.2,301.7 1582.3,298.9 1582.0,296.0 1583.8,293.3 1584.0,290.0" fill="#1c2131"/>
<polygon points="1449.0,343.0 1451.1,341.3 1453.7,340.4 1456.0,339.0 1458.1,340.5 1459.9,342.5 1462.0,344.0 1459.8,346.4 1458.0,349.0 1455.2,349.4 1452.6,349.2 1450.0,348.0 1450.1,345.4 1449.0,343.0" fill="#1c2131"/>
<polygon points="1836.0,325.0 1839.1,325.0 1842.0,326.0 1841.3,328.6 1840.9,331.4 1840.0,334.0 1837.5,333.3 1835.0,333.0 1835.6,330.4 1834.9,327.6 1836.0,325.0" fill="#1c2131"/>
<polygon points="1779.0,412.0 1781.7,411.3 1784.5,411.6 1787.2,411.0 1790.0,411.0 1792.4,411.9 1794.9,412.7 1797.7,412.5 1800.0,414.0 1797.7,415.4 1794.9,414.4 1792.6,415.9 1790.0,416.0 1787.2,416.5 1784.5,415.1 1781.8,416.1 1779.0,416.0 1779.0,412.0" fill="#1c2131"/>
<polygon points="2163.0,436.0 2165.9,434.6 2169.0,434.1 2172.0,433.0 2173.9,435.2 2175.2,437.8 2177.0,440.0 2174.5,442.2 2172.9,445.2 2170.0,447.0 2166.6,446.3 2164.0,444.0 2164.3,441.3 2162.9,438.7 2163.0,436.0" fill="#1c2131"/>
<polygon points="2202.0,422.0 2204.7,421.5 2207.3,422.1 2210.0,422.0 2208.0,426.0 2205.0,426.2 2202.0,426.0 2202.0,422.0" fill="#1c2131"/>
<polygon points="2194.5,485.0 2198.0,484.0 2201.7,484.0 2201.1,487.0 2200.8,490.0 2200.0,493.0 2197.5,492.3 2195.0,492.0 2195.0,488.5 2194.5,485.0" fill="#1c2131"/>
<polyline points="119,515 92,533 66,546" fill="none" stroke="#1c2131" stroke-width="7"/>
<line x1="207.8" y1="233.4" x2="222.6" y2="227.6" stroke="#1c2131" stroke-width="1.4"/>
<line x1="213.3" y1="242.5" x2="228.1" y2="236.7" stroke="#1c2131" stroke-width="1.4"/>
<line x1="220.3" y1="250.6" x2="235.3" y2="247.6" stroke="#1c2131" stroke-width="1.4"/>
<line x1="224.4" y1="259.4" x2="237.1" y2="253.1" stroke="#1c2131" stroke-width="1.4"/>
<line x1="289.0" y1="285.8" x2="282.7" y2="273.1" stroke="#1c2131" stroke-width="1.4"/>
<line x1="305.1" y1="288.3" x2="293.6" y2="276.8" stroke="#1c2131" stroke-width="1.4"/>
<line x1="310.0" y1="292.2" x2="297.3" y2="285.9" stroke="#1c2131" stroke-width="1.4"/>
<line x1="324.5" y1="252.2" x2="311.8" y2="258.6" stroke="#1c2131" stroke-width="1.4"/>
<line x1="327.6" y1="236.7" x2="315.5" y2="245.8" stroke="#1c2131" stroke-width="1.4"/>
<line x1="327.1" y1="223.4" x2="319.1" y2="231.2" stroke="#1c2131" stroke-width="1.4"/>
<polyline points="2224.9,462.7 2236.0,452.0 2253.4,441.3" fill="none" stroke="#1c2131" stroke-width="1.8"/>
<polyline points="1050.0,259.0 1065.0,257.0 1080.0,254.0 1086.0,252.0" fill="none" stroke="#1c2131" stroke-width="1.8"/>
<polyline points="1053.0,280.0 1065.0,277.0 1078.0,275.0" fill="none" stroke="#1c2131" stroke-width="1.8"/>
<polyline points="1055.0,240.0 1068.0,236.0 1073.0,233.0" fill="none" stroke="#1c2131" stroke-width="1.8"/>
<polyline points="1054.0,294.0 1062.0,297.0 1070.0,291.0" fill="none" stroke="#1c2131" stroke-width="1.8"/>
<polyline points="1758.2,422.6 1742.4,425.2 1731.8,429.2 1726.5,437.1 1725.2,443.7" fill="none" stroke="#1c2131" stroke-width="1.8"/>
<polyline points="1718.6,455.5 1723.9,463.5 1737.1,458.2" fill="none" stroke="#1c2131" stroke-width="1.8"/>
<polyline points="1808.0,387.0 1819.0,379.0 1826.7,373.8 1828.0,360.6" fill="none" stroke="#1c2131" stroke-width="1.8"/>
<polyline points="1687.0,524.0 1681.0,532.0 1680.0,538.0" fill="none" stroke="#1c2131" stroke-width="1.8"/>
<polyline points="1880.0,510.0 1881.0,520.0 1886.0,520.0" fill="none" stroke="#1c2131" stroke-width="1.8"/>
<polyline points="1455.3,486.0 1459.2,484.4 1462.3,481.9 1464.0,477.6 1467.1,475.2 1471.5,474.2 1474.4,471.5 1477.5,468.8 1480.3,466.0" fill="none" stroke="#3e4b84" stroke-width="0.8"/>
<polyline points="1510.4,496.0 1512.8,492.7 1516.2,490.4 1518.7,487.2 1522.0,484.8 1524.9,481.9 1526.7,478.1 1530.4,476.0 1534.1,473.8 1538.6,474.9 1542.2,472.4 1546.2,471.3 1550.7,472.3 1554.4,469.9 1558.6,469.8 1562.4,467.9 1566.5,467.4 1570.4,466.0" fill="none" stroke="#3e4b84" stroke-width="0.8"/>
<polyline points="1500.4,506.0 1503.4,508.7 1505.3,512.3 1508.2,515.2 1510.2,518.7 1512.6,521.8 1516.3,524.0 1518.9,527.1 1520.4,531.0 1524.2,532.9 1528.6,532.4 1532.6,533.3 1536.1,536.3 1540.4,535.9 1544.2,537.8 1548.4,537.9 1552.3,539.4 1556.6,539.1 1560.4,541.0" fill="none" stroke="#3e4b84" stroke-width="0.8"/>
<polyline points="1590.5,466.0 1593.7,468.7 1596.7,471.7 1598.9,475.4 1602.1,478.1 1605.0,481.2 1607.1,484.9 1608.8,489.0 1611.7,492.0 1614.5,495.1 1618.3,497.3 1620.5,501.0 1622.9,504.2 1626.0,506.9 1628.7,509.8 1631.3,512.9 1633.6,516.2 1634.6,520.4 1637.3,523.4 1640.5,526.0 1637.8,529.4 1635.8,533.2 1635.2,537.8 1632.9,541.4 1630.5,545.0" fill="none" stroke="#3e4b84" stroke-width="0.8"/>
<polyline points="1710.6,491.0 1714.8,491.9 1718.6,494.1 1722.7,495.2 1726.5,497.3 1730.5,498.8 1735.1,498.9 1739.1,500.3 1742.4,503.8 1746.9,503.9 1750.7,506.0 1753.5,509.0 1754.1,513.4 1757.4,516.0 1758.9,519.8 1761.9,522.6 1763.7,526.2 1767.0,528.8 1768.2,532.9 1770.7,536.0" fill="none" stroke="#3e4b84" stroke-width="0.8"/>
<polyline points="1795.7,466.0 1799.4,467.7 1803.0,469.6 1805.9,472.4 1809.6,474.1 1813.0,476.2 1815.9,479.1 1818.5,482.5 1822.0,484.4 1825.8,486.0 1828.5,489.0 1832.5,490.4 1835.1,493.6 1838.7,495.5 1842.0,497.8 1845.2,500.2 1848.1,502.9 1850.8,506.0 1853.1,509.9 1856.4,512.9 1859.6,515.9 1862.7,519.1 1867.0,521.1 1869.9,524.4 1872.4,528.1 1875.8,531.0" fill="none" stroke="#3e4b84" stroke-width="0.8"/>
<polyline points="1910.9,466.0 1913.1,469.5 1915.4,473.0 1917.8,476.5 1920.0,480.0 1922.9,483.0 1925.9,486.0 1922.1,487.6 1920.4,492.0 1916.6,493.6 1912.7,495.1 1910.0,498.2 1906.5,500.2 1904.7,504.3 1900.9,506.0 1903.8,508.8 1907.1,511.2 1909.4,514.7 1912.2,517.6 1916.1,519.4 1918.6,522.6 1920.9,526.0 1919.4,530.1 1915.9,533.1 1914.3,537.1 1913.7,541.6 1910.9,545.0" fill="none" stroke="#3e4b84" stroke-width="0.8"/>
<polyline points="1981.0,466.0 1982.4,470.2 1982.3,474.6 1983.5,478.8 1983.6,483.2 1984.2,487.5 1986.4,491.5 1986.0,496.0 1986.5,500.5 1983.7,504.4 1984.5,509.0 1983.8,513.3 1981.2,517.2 1981.8,521.7 1981.0,526.0" fill="none" stroke="#3e4b84" stroke-width="0.8"/>
<polyline points="2101.1,466.0 2103.4,469.9 2104.3,474.4 2106.4,478.4 2107.5,482.8 2109.1,487.0 2111.1,491.0 2111.6,495.5 2111.1,499.9 2108.4,504.0 2109.2,508.6 2108.7,513.0 2106.1,517.1 2106.8,521.6 2106.1,526.0" fill="none" stroke="#3e4b84" stroke-width="0.8"/>
<polyline points="2231.3,541.0 2235.8,541.5 2240.1,540.7 2244.0,537.7 2248.3,537.1 2252.9,538.3 2257.1,537.3 2261.3,536.0" fill="none" stroke="#3e4b84" stroke-width="0.8"/>
<polyline points="2291.3,496.0 2294.7,498.4 2297.0,501.8 2300.2,504.3 2302.6,507.6 2305.4,510.5 2309.3,512.3 2311.4,516.0 2314.0,512.7 2318.6,512.3 2321.1,508.8 2324.4,506.5 2328.8,506.0 2331.4,502.6 2335.2,501.2 2338.0,498.2 2341.4,496.0" fill="none" stroke="#3e4b84" stroke-width="0.8"/>
<polyline points="2157.1,266.5 2161.1,267.7 2165.3,268.3 2169.5,267.9 2173.7,267.8 2177.9,267.6 2181.8,269.7 2186.0,269.7 2190.1,270.9 2194.3,270.4 2198.3,271.9 2202.6,271.1 2206.6,272.9 2210.7,273.2 2215.0,272.8 2219.1,273.6 2223.2,274.5 2227.4,273.7 2231.5,275.1 2235.6,275.4 2239.8,275.1 2243.5,272.6 2247.8,272.8 2251.8,271.4 2255.9,270.7 2259.6,268.3 2263.4,266.6 2267.7,266.5 2271.5,264.7 2274.8,262.2 2277.6,259.0 2280.4,255.8 2283.9,253.6 2287.9,252.1 2290.7,248.9 2294.4,246.9 2292.5,242.6 2289.0,239.6 2285.4,236.7 2283.5,232.4 2280.1,229.3 2278.5,224.8 2274.8,221.9 2274.0,217.1 2271.2,213.0" fill="none" stroke="#3e4b84" stroke-width="0.8"/>
<polyline points="2157.1,266.5 2155.7,270.4 2154.3,274.3 2153.4,278.3 2150.1,281.4 2150.6,286.1 2147.9,289.4 2145.4,292.9 2145.9,297.5 2143.2,300.8 2141.5,304.6 2141.4,309.0 2139.0,312.5 2136.7,316.0 2135.7,320.0 2134.0,323.6 2131.6,326.9 2131.1,331.1 2128.5,334.3 2130.9,337.9 2133.0,341.7 2133.9,346.1 2134.7,350.4 2137.2,354.0 2138.6,358.1 2141.3,361.6 2142.2,365.9 2145.6,369.1 2146.4,373.5 2146.5,377.9 2145.1,382.2 2144.6,386.5 2145.0,391.0 2145.5,395.4 2144.6,399.8 2144.4,404.1 2143.8,408.5 2142.8,412.8 2140.3,416.5 2139.9,421.1 2136.5,424.4 2134.7,428.4 2134.9,433.3 2132.4,437.0 2130.3,440.9 2128.5,444.9 2133.0,445.3 2136.7,447.8 2140.4,450.5 2145.2,450.1 2148.8,452.8 2153.4,453.1 2157.1,455.6 2153.4,459.0 2149.9,462.7 2145.8,463.7 2143.1,467.3 2139.8,469.7 2136.2,471.4 2132.0,472.3 2129.1,475.5 2125.5,477.3 2121.4,478.3 2117.3,479.2 2114.4,482.3 2110.7,484.1" fill="none" stroke="#3e4b84" stroke-width="0.8"/>
<polyline points="2100.0,330.7 2104.2,330.5 2108.3,330.7 2112.2,332.0 2116.4,331.9 2120.5,332.2 2124.5,333.5 2128.5,334.3 2124.9,336.4 2122.3,339.5 2119.5,342.4 2117.7,346.2 2114.3,348.6 2109.5,348.5 2104.8,349.2 2100.0,348.6" fill="none" stroke="#3e4b84" stroke-width="0.8"/>
<polyline points="2267.7,266.5 2268.2,270.5 2268.2,274.6 2268.6,278.6 2270.4,282.4 2271.2,286.4 2270.6,290.5 2271.3,294.5 2271.2,298.6 2274.7,301.0 2278.7,302.3 2282.6,303.8 2286.5,305.3 2290.3,307.2 2294.6,307.6 2298.2,310.0 2302.3,311.0 2305.4,314.4 2310.1,314.0 2313.2,317.5 2317.8,317.3 2321.2,320.0 2324.5,322.6 2328.5,323.9 2332.0,326.2 2335.0,329.3 2339.0,330.7 2337.3,335.0 2334.6,338.5 2330.1,340.8 2328.3,345.0 2331.9,347.4 2336.0,348.9 2338.3,353.2 2341.9,355.5 2346.7,356.1 2349.7,359.3 2348.1,363.5 2347.0,368.0 2344.8,371.9 2342.3,375.8 2341.6,380.4 2339.0,384.2 2340.0,388.5 2343.1,392.0 2344.4,396.2 2344.3,400.8 2346.9,404.5 2348.4,408.6 2349.7,412.8 2347.4,416.8 2345.7,421.0 2343.9,425.1 2342.7,429.6 2339.0,432.9 2336.4,436.7 2335.5,441.3 2336.4,445.9 2339.2,449.7 2341.9,453.4 2343.9,457.5 2345.2,461.9 2347.3,466.0 2349.7,469.9 2349.3,474.5 2347.6,478.7 2345.9,482.9 2344.1,487.1 2342.0,491.2 2341.4,495.7 2340.0,500.0 2342.9,503.1 2342.9,507.6 2345.6,510.8 2347.2,514.6 2349.7,517.9 2351.1,521.7 2353.0,525.3 2353.9,529.4 2357.3,532.3 2358.1,536.4 2360.0,540.0" fill="none" stroke="#3e4b84" stroke-width="0.8"/>
<polyline points="2146.4,373.5 2150.6,373.5 2154.3,376.1 2158.7,374.7 2162.5,376.9 2166.8,376.0 2170.8,377.1 2174.5,379.8 2178.9,378.5 2182.7,380.3 2186.8,380.5 2190.9,381.2 2194.9,382.0 2199.1,382.0 2202.8,384.3 2207.0,384.2 2211.2,385.7 2214.5,388.4 2218.4,390.3 2221.6,393.2 2225.0,395.9 2228.4,398.5 2232.7,399.0 2236.7,397.0 2240.8,395.8 2245.0,395.5 2249.4,396.8 2253.4,395.0 2255.2,399.1 2254.5,403.6 2255.9,407.8 2255.9,412.2 2257.0,416.4 2261.1,413.9 2265.8,412.6 2269.8,410.0 2274.3,408.2 2278.4,405.7 2282.7,405.5 2286.4,403.5 2290.0,401.2 2293.9,399.9 2298.6,400.9 2302.2,398.5 2305.9,396.6 2310.5,397.3 2314.1,395.0 2318.3,393.4 2322.6,391.9 2326.9,390.5 2330.5,387.3 2334.7,385.7 2339.0,384.2" fill="none" stroke="#3e4b84" stroke-width="0.8"/>
<polyline points="2278.4,405.7 2277.6,410.1 2277.6,414.6 2278.4,419.1 2279.0,423.5 2279.7,427.9 2278.0,432.4 2278.5,436.9 2278.4,441.3 2279.2,445.8 2281.6,449.8 2282.0,454.4 2284.6,458.2 2285.5,462.7 2288.0,466.3 2291.2,469.2 2294.8,471.7 2297.7,475.0 2300.5,478.3 2304.4,480.5 2306.9,484.1 2308.2,488.4 2309.0,492.9 2311.8,496.7 2311.9,501.5 2314.1,505.5 2311.6,509.4 2309.2,513.3 2308.4,517.9 2306.9,522.3 2303.2,525.6 2301.1,529.7 2299.8,534.1" fill="none" stroke="#3e4b84" stroke-width="0.8"/>
<polyline points="2157.1,455.6 2158.8,459.6 2161.2,463.2 2164.3,466.3 2167.1,469.5 2170.1,472.7 2171.4,477.0 2175.5,475.8 2179.3,473.8 2183.5,472.9 2187.1,470.3 2191.4,469.7 2194.9,466.9 2199.4,466.6 2203.3,464.8 2207.0,462.7 2211.2,461.1 2215.6,460.0 2220.0,458.9 2223.9,456.3 2228.4,455.6 2232.6,457.2 2236.7,459.2 2241.4,459.3 2245.3,462.0 2249.8,462.7 2253.9,462.4 2257.9,462.0 2261.6,459.9 2265.5,458.5 2269.8,459.5 2273.8,458.7 2277.5,457.0 2281.3,455.4 2285.5,455.6" fill="none" stroke="#3e4b84" stroke-width="0.8"/>
<polyline points="2149.9,462.7 2153.2,465.1 2155.5,468.5 2158.7,471.0 2161.1,474.3 2164.0,477.2 2167.9,479.1 2170.8,481.8 2172.2,486.2 2176.1,488.0 2178.5,491.3 2181.0,494.6 2181.2,499.2 2184.3,502.2 2185.3,506.3 2188.1,509.5 2189.6,513.3 2192.6,516.4 2193.4,520.6 2194.8,524.5 2197.4,527.7 2198.8,531.6 2200.9,535.2 2204.2,538.1 2204.5,542.6 2207.0,545.9" fill="none" stroke="#3e4b84" stroke-width="0.8"/>
<polyline points="1157.0,213.0 1159.5,217.6 1161.9,222.2 1163.1,227.3 1162.9,231.6 1164.7,235.8 1163.7,240.1 1164.3,244.4 1164.2,248.7 1167.9,253.5 1169.5,259.4 1169.2,263.6 1170.1,267.8 1168.8,271.9 1169.5,276.1 1169.1,280.3 1167.8,284.4 1166.4,288.4 1163.8,292.0 1163.9,296.7 1162.1,300.5 1159.5,304.1 1157.2,307.8 1156.5,312.1 1155.3,316.2 1153.5,320.1 1149.4,320.7 1146.3,323.6" fill="none" stroke="#3e4b84" stroke-width="0.8"/>
<polyline points="1453.3,213.0 1451.4,217.0 1449.1,220.7 1446.0,223.9 1444.0,227.8 1441.7,231.5 1438.5,234.6 1434.9,237.4 1432.7,241.1 1430.2,244.7 1428.3,248.7 1426.2,252.3 1422.9,254.9 1420.7,258.5 1418.2,261.8 1415.7,265.0 1412.8,267.9 1408.7,269.9 1406.9,273.7 1403.8,276.8 1401.4,280.4 1399.7,284.4" fill="none" stroke="#3e4b84" stroke-width="0.8"/>
<polyline points="1433.7,255.8 1437.4,258.4 1441.4,259.8 1446.3,259.1 1450.3,260.6 1453.7,263.9 1457.8,265.2 1461.9,266.5 1466.3,267.0 1470.1,269.2 1474.2,270.7 1478.3,271.9" fill="none" stroke="#3e4b84" stroke-width="0.8"/>
<polyline points="1406.9,309.4 1405.1,313.3 1403.0,317.1 1400.0,320.3 1398.1,324.2 1395.9,327.9 1392.6,330.8 1393.8,335.2 1393.3,339.9 1394.5,344.3 1396.2,348.6 1399.3,352.7 1403.4,355.8" fill="none" stroke="#3e4b84" stroke-width="0.8"/>
<polyline points="1349.8,352.2 1354.6,351.3 1359.5,350.4 1364.1,348.6 1366.2,352.6 1368.5,356.4 1371.6,359.7 1374.8,362.9 1379.5,363.1 1383.5,359.9 1388.1,360.1 1392.6,359.3 1398.4,358.6 1403.4,355.8" fill="none" stroke="#3e4b84" stroke-width="0.8"/>
<polyline points="1403.4,355.8 1403.3,360.2 1401.8,364.3 1401.5,368.7 1400.2,372.9 1399.7,377.2 1400.4,381.4 1402.9,385.1 1404.0,389.1 1403.0,393.7 1405.4,397.4 1406.5,401.5 1406.9,405.7" fill="none" stroke="#3e4b84" stroke-width="0.8"/>
<polyline points="1299.8,402.2 1304.8,401.1 1309.6,399.4 1314.1,396.8 1318.6,397.7 1323.1,398.0 1327.7,398.2 1331.9,400.4 1336.1,400.5 1340.2,399.7 1344.4,400.2 1348.5,398.9 1352.8,399.6 1356.9,398.6 1360.8,400.7 1363.6,404.3 1367.3,406.7 1371.3,408.6 1374.7,411.4 1378.1,414.2 1381.9,416.4 1385.8,413.9 1390.3,413.0 1394.7,411.8 1398.3,408.7 1403.0,408.2 1406.9,405.7" fill="none" stroke="#3e4b84" stroke-width="0.8"/>
<polyline points="1381.9,416.4 1382.4,421.4 1383.5,426.1 1385.5,430.7 1381.9,433.4 1378.7,436.5 1375.6,439.8 1371.2,441.4 1369.9,445.8 1369.5,450.4 1367.8,454.7 1367.6,459.3 1363.5,460.2 1359.2,459.8 1355.2,461.6 1350.8,460.9 1346.7,461.6 1342.6,462.8 1338.9,460.1 1335.5,457.0 1332.2,453.9 1327.9,452.1 1324.8,448.6" fill="none" stroke="#3e4b84" stroke-width="0.8"/>
<polyline points="1299.8,430.7 1304.7,431.2 1309.3,433.2 1314.1,434.3 1317.0,437.7 1319.2,441.6 1321.9,445.2 1324.8,448.6" fill="none" stroke="#3e4b84" stroke-width="0.8"/>
<polyline points="1278.4,450.4 1282.6,451.7 1286.8,451.9 1291.1,449.7 1295.3,449.9 1299.5,452.0 1303.7,451.9 1307.9,451.9 1312.2,451.1 1316.4,452.1 1320.6,452.2 1324.8,452.1" fill="none" stroke="#3e4b84" stroke-width="0.8"/>
<polyline points="1324.8,452.1 1326.3,456.3 1327.8,460.4 1329.5,464.5 1330.9,468.7 1333.2,472.5 1334.5,476.7 1338.4,479.8 1339.1,484.3 1339.9,488.6 1339.4,493.0 1340.8,497.2 1340.9,501.6 1342.6,505.7 1341.3,509.8 1338.4,512.9 1336.8,516.7 1334.0,519.9 1332.0,523.5 1333.6,527.3 1336.7,530.5 1338.0,534.4 1339.6,538.3 1339.9,542.7 1342.6,546.0" fill="none" stroke="#3e4b84" stroke-width="0.8"/>
<polyline points="1406.9,405.7 1411.1,406.6 1415.2,407.5 1418.8,410.1 1423.3,410.0 1426.9,412.5 1431.1,413.4 1435.4,414.0 1439.0,416.4 1441.1,420.0 1444.3,422.9 1445.6,427.1 1448.5,430.1 1449.7,434.3 1452.1,438.2 1452.8,442.8 1453.2,447.4 1456.4,451.1 1456.9,455.7 1460.4,458.8 1462.6,463.0 1464.9,467.1 1468.6,470.1 1471.9,473.4 1474.7,477.1 1472.1,481.0 1473.0,486.0 1469.6,489.6 1469.5,494.4 1467.6,498.5 1469.9,502.5 1471.4,506.8 1472.3,511.2 1472.5,516.0 1474.7,520.0" fill="none" stroke="#3e4b84" stroke-width="0.8"/>
<polyline points="1342.6,516.4 1347.1,516.3 1351.6,516.1 1356.1,515.8 1360.6,515.7 1365.0,514.8 1369.5,514.8 1373.7,512.0 1378.3,512.8 1382.4,514.1 1386.0,516.6 1390.3,517.2 1394.1,519.1 1398.7,518.5 1402.5,520.7 1406.7,521.5 1410.5,523.5 1414.4,524.4 1418.4,525.3 1422.7,524.7 1426.5,526.0 1430.4,526.9 1434.1,529.4 1438.1,529.8 1442.4,529.0 1446.2,530.7 1450.5,529.9 1454.0,526.8 1458.5,526.4 1462.1,523.7 1466.1,521.8 1471.0,522.4 1474.7,520.0" fill="none" stroke="#3e4b84" stroke-width="0.8"/>
<polyline points="1192.7,462.8 1194.8,466.9 1196.6,471.1 1197.3,475.6 1199.3,479.7 1199.9,484.3 1200.1,488.6 1198.3,492.4 1196.1,496.1 1195.5,500.2 1194.7,504.2 1195.2,508.5 1193.5,512.4 1192.7,516.4 1194.8,520.4 1196.6,524.6 1198.2,528.7 1199.5,533.1 1199.3,537.9 1201.1,542.1 1203.4,546.0" fill="none" stroke="#3e4b84" stroke-width="0.8"/>
<polyline points="1103.5,434.3 1108.5,435.4 1113.0,437.9 1117.8,439.6 1122.2,438.8 1126.7,439.0 1131.2,438.7 1135.6,437.9" fill="none" stroke="#3e4b84" stroke-width="0.8"/>
<polyline points="1082.0,480.0 1083.0,484.5 1081.3,489.1 1083.7,493.4 1083.0,498.0 1080.5,501.2 1079.0,505.0 1082.0,510.0 1079.1,513.4 1075.0,515.0 1071.6,517.3 1067.1,517.2 1064.0,520.0 1066.7,524.7 1068.0,530.0 1068.1,534.0 1069.1,538.0 1069.6,542.0 1070.0,546.0" fill="none" stroke="#3e4b84" stroke-width="0.8"/>
<polyline points="1040.0,532.0 1044.8,530.0 1049.7,528.3 1055.0,528.0 1058.9,529.2 1062.8,530.2 1066.7,531.5 1070.0,534.0 1073.5,537.8 1075.8,542.7 1080.0,546.0" fill="none" stroke="#3e4b84" stroke-width="0.8"/>
<polyline points="1885.5,211.6 1885.9,216.1 1885.7,220.6 1886.0,225.1 1887.7,229.5 1888.4,234.0 1887.4,238.6 1891.9,238.3 1896.4,238.0 1900.9,238.6 1904.4,241.0 1908.4,242.5 1912.4,244.0 1916.3,245.6 1920.0,247.5 1924.4,248.0 1928.0,250.4 1932.1,251.5 1935.6,254.0 1935.9,258.2 1939.3,261.3 1938.7,265.8 1941.8,269.1 1941.6,273.4 1943.7,277.0 1944.9,280.9 1945.1,285.1 1947.2,288.7 1950.3,292.0 1952.1,295.9 1952.0,300.8 1954.9,304.2 1957.8,307.6 1958.8,311.9 1961.4,315.7 1964.8,318.6 1969.6,319.8 1972.4,323.3 1976.3,325.6 1979.4,328.9 1982.2,332.4 1985.8,335.0 1989.1,331.4 1993.8,329.7 1996.7,325.4 2001.2,323.5 2004.3,320.7 2008.6,320.0 2011.6,317.0 2015.1,314.9 2018.9,313.2 2022.2,310.8 2025.6,308.5 2028.6,305.6 2033.1,305.0 2036.9,303.5 2039.8,300.3 2044.7,300.3 2049.2,298.4 2053.6,296.5 2058.3,295.3 2063.0,294.5 2066.0,297.4 2069.3,299.8 2073.5,301.2 2076.6,303.9 2079.7,306.6 2082.8,309.4 2086.1,311.9 2089.6,314.5 2093.8,315.8 2098.2,316.6 2101.2,320.4 2105.5,321.4 2109.2,323.5 2113.4,324.7 2117.1,327.1 2121.0,329.0 2124.4,331.8 2129.0,332.2 2132.4,335.0" fill="none" stroke="#3e4b84" stroke-width="0.8"/>
<polyline points="2063.0,338.9 2062.1,343.3 2061.3,347.6 2060.6,352.0 2059.6,356.4 2059.6,360.9 2058.6,365.2 2059.1,369.8 2062.7,373.0 2064.3,377.5 2065.8,382.0 2069.0,385.4 2071.1,389.6 2074.5,392.9 2073.5,397.2 2070.7,400.6 2069.3,404.7 2066.7,408.2 2064.7,412.1 2063.0,416.0 2064.7,420.2 2064.7,424.6 2065.0,429.0 2063.8,433.5 2064.7,437.8 2066.7,442.0 2065.6,446.5 2066.8,450.8" fill="none" stroke="#3e4b84" stroke-width="0.8"/>
<polyline points="1985.8,335.0 1984.7,339.0 1983.6,343.1 1980.8,346.4 1980.7,350.9 1978.1,354.3 1976.9,358.7 1976.2,363.2 1975.9,367.8 1973.7,372.0 1973.8,376.7 1971.7,380.8 1970.4,385.2 1967.0,388.1 1963.1,390.0 1958.9,391.2 1954.9,392.9 1950.8,393.4 1947.5,396.4 1943.6,397.4 1939.4,397.7 1935.3,398.2 1931.8,400.6 1927.6,400.4 1923.4,400.9 1919.2,399.4 1915.0,401.8 1910.8,399.7 1906.5,401.1 1902.3,401.5 1898.1,401.6 1893.9,401.1 1889.7,399.8 1885.5,400.6 1880.9,400.3 1876.7,398.2 1872.3,396.9 1867.8,396.5 1863.5,395.0 1858.7,395.1 1854.6,392.9" fill="none" stroke="#3e4b84" stroke-width="0.8"/>
<polyline points="1885.5,238.6 1883.9,242.7 1883.0,247.0 1883.0,251.5 1882.7,255.9 1882.5,260.3 1880.0,264.3 1879.6,268.6 1878.0,272.8 1877.8,277.2 1877.0,281.7 1874.9,285.8 1875.1,290.5 1872.6,294.6 1871.7,299.1 1871.4,303.7 1870.1,308.0 1873.3,310.8 1876.4,313.9 1880.5,315.7 1883.2,319.1 1886.1,322.4 1890.3,324.1 1893.2,327.3 1890.0,330.7 1887.7,334.8 1885.5,338.9 1882.7,342.1 1881.8,346.3 1880.2,350.2 1876.6,352.9 1874.5,356.5 1873.3,360.6 1872.0,364.6 1869.7,368.1 1866.7,371.1 1865.4,375.2 1861.8,377.9 1860.6,382.0 1859.4,386.1 1856.3,389.1 1854.6,392.9" fill="none" stroke="#3e4b84" stroke-width="0.8"/>
<polyline points="1800.6,277.2 1796.0,277.6 1791.7,275.4 1787.2,274.9 1782.8,273.5 1778.0,274.5 1773.6,273.3 1773.5,278.0 1771.5,282.5 1770.9,287.2 1771.1,291.9 1769.8,296.5 1773.5,298.6 1777.6,299.5 1781.1,302.1 1785.6,302.2 1789.4,304.1 1792.5,307.3 1796.8,308.0 1795.2,312.0 1793.5,316.0 1790.3,319.2 1788.7,323.3 1787.9,327.7 1785.1,331.1 1782.9,334.8 1781.3,338.9 1778.6,342.1 1774.6,343.7 1772.3,347.4 1768.7,349.5 1765.9,352.6 1762.0,354.3 1763.5,358.4 1762.2,362.9 1764.4,366.9 1763.6,371.3 1765.7,375.3 1766.0,379.6 1766.0,383.9 1767.2,388.1 1769.4,392.0 1768.9,396.4 1769.8,400.6 1774.0,401.8 1778.5,401.5 1782.8,402.1 1786.7,405.0 1791.2,404.9 1795.6,405.0 1799.8,406.5 1804.2,406.7 1808.3,408.3 1806.4,412.5 1806.1,417.1 1806.0,421.8 1803.1,425.8 1803.8,430.6 1802.3,434.9 1800.6,439.2 1803.6,442.5 1803.9,447.2 1807.3,450.3 1808.2,454.7 1811.2,458.0 1812.2,462.4 1813.6,466.5 1816.0,470.1 1819.8,472.1 1823.8,473.8 1827.6,475.8 1831.5,477.8 1834.2,481.6 1836.4,485.6 1840.1,488.8 1841.8,493.2 1844.9,496.7 1846.9,500.9 1850.5,503.1 1854.3,504.6 1858.9,503.7 1862.7,505.2 1866.1,507.8 1870.1,508.6 1874.5,508.3 1878.6,506.4 1883.2,507.7 1887.6,507.8 1891.8,506.0 1896.1,505.4 1900.5,505.5 1904.8,504.8" fill="none" stroke="#3e4b84" stroke-width="0.8"/>
<polyline points="1657.9,269.4 1661.6,267.8 1665.4,266.2 1669.6,266.3 1673.0,263.7 1677.2,263.7 1681.0,262.2 1684.6,260.2 1688.8,260.2 1692.3,257.9 1696.5,257.9 1700.7,256.9 1704.8,255.1 1709.1,254.3 1713.6,254.3 1718.1,254.5 1722.0,251.8 1726.3,251.2 1730.8,251.4 1735.0,250.2 1738.4,252.9 1742.6,253.6 1746.7,254.8 1750.0,257.7 1754.7,257.1 1757.8,260.7 1762.2,260.9 1766.2,262.1 1770.1,263.7 1773.8,265.7 1777.1,268.6 1781.3,269.4 1785.5,270.2 1788.9,272.7 1792.7,274.4 1796.9,275.3 1800.6,277.2 1803.9,274.7 1806.3,271.2 1809.5,268.6 1813.0,266.3 1817.0,264.7 1819.8,261.6 1822.8,258.8 1826.5,256.8 1829.5,253.9 1832.4,251.0 1836.5,249.5 1839.2,246.3 1843.5,246.1 1847.5,244.2 1851.9,244.4 1856.0,243.6 1860.4,243.8 1864.6,242.7 1868.6,240.9 1873.1,241.9 1876.9,239.0 1881.3,239.1 1885.5,238.6" fill="none" stroke="#3e4b84" stroke-width="0.8"/>
<polyline points="1600.0,269.4 1604.1,268.9 1608.3,268.5 1612.4,269.8 1616.5,268.3 1620.7,269.5 1624.8,269.1 1629.0,268.3 1633.1,269.4 1637.2,268.2 1641.4,269.2 1645.5,268.3 1649.6,268.3 1653.8,269.2 1657.9,269.4 1660.5,272.8 1664.9,274.3 1667.8,277.3 1670.3,280.9 1672.9,284.3 1676.7,286.4 1680.2,288.9 1682.3,292.8 1687.1,293.8 1688.8,298.2 1692.6,300.3 1694.4,305.3 1696.1,310.3 1696.5,315.7 1696.0,319.9 1694.1,323.6 1691.4,327.0 1691.5,331.4 1689.1,334.9 1687.5,338.7 1686.7,342.9 1684.9,346.6 1689.1,347.4 1693.4,346.8 1697.6,347.4 1701.7,348.4 1705.7,350.3 1710.0,350.3 1714.2,350.6 1718.3,352.0 1722.5,352.3 1726.7,352.5 1730.7,354.4 1735.0,354.3 1739.5,354.8 1744.0,353.6 1748.5,354.5 1753.0,354.4 1757.5,355.3 1762.0,354.3" fill="none" stroke="#3e4b84" stroke-width="0.8"/>
<polyline points="1735.0,211.6 1735.0,216.2 1733.6,220.6 1733.4,225.1 1732.2,229.6 1731.5,234.1 1731.2,238.6 1730.7,242.9 1729.3,246.8 1725.8,249.9 1725.6,254.3 1723.5,257.9" fill="none" stroke="#3e4b84" stroke-width="0.8"/>
<polyline points="1600.0,354.3 1604.1,355.1 1607.3,358.3 1611.9,357.7 1615.3,360.6 1619.7,360.5 1623.4,362.4 1626.6,365.7 1630.9,365.9 1633.5,369.4 1634.4,373.8 1636.8,377.4 1638.6,381.3 1636.1,384.6 1633.4,387.7 1631.5,391.5 1627.6,393.6 1626.5,398.1 1623.1,400.6 1627.3,401.9 1631.4,403.3 1635.0,405.8 1638.7,408.1 1641.9,411.2 1646.4,411.9 1650.6,413.2 1654.0,416.0 1657.7,414.1 1662.1,414.6 1665.2,411.1 1669.5,411.2 1673.2,409.3 1677.3,408.7 1680.9,406.6 1685.0,406.2 1688.7,404.4 1692.7,403.5 1696.8,402.9 1700.3,400.6 1704.6,400.8 1709.0,399.7 1713.3,399.5 1717.7,401.8 1722.0,400.6 1726.3,399.8 1730.7,401.8 1735.0,400.6 1737.3,397.1 1739.7,393.8 1742.1,390.4 1742.8,386.1 1745.1,382.6 1748.3,379.7 1748.7,375.2 1752.2,372.5 1752.8,368.0 1756.2,365.2 1758.3,361.7 1760.9,358.5 1762.0,354.3" fill="none" stroke="#3e4b84" stroke-width="0.8"/>
<polyline points="1700.3,400.6 1701.8,404.9 1703.4,409.2 1703.2,413.9 1705.8,418.0 1705.7,422.7 1707.2,427.0 1708.0,431.5 1710.0,435.6 1709.7,440.1 1711.7,444.1 1711.6,448.6 1713.4,452.7 1714.2,457.0 1714.2,461.5 1714.0,466.0 1715.7,470.1 1719.1,473.4 1721.5,477.4 1723.2,481.8 1725.1,486.1 1728.5,489.5 1731.2,493.2 1735.7,494.0 1739.7,496.6 1744.7,495.4 1748.6,498.5 1753.3,498.2 1757.8,498.9 1762.0,500.9 1764.1,504.5 1764.7,508.5 1764.6,512.7 1767.3,516.1 1767.4,520.2 1768.3,524.1 1769.8,527.9 1767.5,531.3 1764.5,534.3 1762.9,538.3 1760.4,541.5 1757.5,544.5 1754.3,547.2" fill="none" stroke="#3e4b84" stroke-width="0.8"/>
<polyline points="1600.0,431.5 1603.7,434.3 1607.4,437.2 1611.1,439.8 1614.8,442.7 1618.9,444.9 1623.1,446.9 1625.2,450.6 1629.8,451.8 1631.9,455.5 1633.9,459.3 1637.3,461.7 1639.8,465.0 1644.1,466.5 1646.3,470.1 1650.7,469.5 1655.0,468.3 1659.6,468.5 1664.0,468.1 1668.2,466.1 1672.7,466.0 1677.2,466.2 1681.5,466.1 1685.6,468.1 1690.0,468.2 1694.4,467.1 1698.5,469.1 1703.0,467.9 1707.1,469.5 1711.5,468.7 1715.7,470.1" fill="none" stroke="#3e4b84" stroke-width="0.8"/>
<polyline points="1912.5,462.3 1916.9,461.8 1921.1,460.7 1925.5,460.4 1929.7,458.7 1934.3,459.5 1938.7,458.9 1942.9,457.7 1947.2,456.6 1951.3,454.7 1955.8,454.5 1960.0,452.9 1964.2,451.7 1968.9,452.4 1973.2,451.4 1976.9,447.9 1981.7,448.9 1985.8,446.9 1989.7,446.0 1993.4,444.3 1997.2,442.9 2001.4,442.7 2005.1,441.0 2009.1,440.4 2012.9,439.2 2016.4,436.7 2020.7,437.1 2024.4,435.3 2027.8,438.0 2031.7,439.5 2035.9,440.2 2040.3,440.4 2044.2,441.9 2047.9,443.7 2051.0,447.2 2055.5,447.2 2059.3,448.9 2063.0,450.8 2066.3,454.0 2071.0,455.0 2074.5,457.8 2078.5,459.9 2082.3,462.3 2087.0,461.8 2091.3,463.8 2095.7,465.1 2100.4,464.0 2104.9,464.8 2109.3,466.2 2113.1,464.9 2116.7,462.8 2120.9,462.8 2125.0,462.5 2128.7,461.0 2132.5,459.5 2136.6,459.2 2139.9,456.3 2144.1,456.2 2147.8,454.6 2151.8,454.1 2155.6,452.7 2159.4,455.5 2161.2,460.1 2165.6,462.4 2168.6,466.0 2171.0,470.0 2172.0,474.0 2173.4,477.8 2176.4,480.9 2178.1,484.6 2180.3,488.1 2181.9,491.8 2182.9,495.8 2185.6,499.0 2187.5,502.6 2188.5,506.7 2190.9,510.0 2191.5,514.2 2192.8,518.1 2194.6,521.7 2197.1,525.0 2199.1,528.6 2200.6,532.3 2203.4,535.5 2203.5,540.0 2205.7,543.4" fill="none" stroke="#3e4b84" stroke-width="0.8"/>
<polyline points="1912.5,462.3 1908.9,464.9 1905.7,467.9 1903.2,471.6 1900.5,475.1 1897.0,477.8 1898.9,482.0 1897.7,486.7 1898.8,491.0 1898.6,495.5 1900.2,499.8 1899.7,504.3 1901.0,508.6 1897.4,511.4 1892.8,512.6 1889.1,515.0 1885.6,518.1 1881.6,520.2 1877.7,521.8 1873.7,523.2 1870.4,526.1 1866.2,527.0 1862.1,528.1 1858.8,531.1 1854.4,531.5 1850.6,533.5 1847.0,535.7 1842.4,535.9 1838.2,538.3 1834.0,540.0 1829.1,539.3 1824.7,540.4 1820.5,542.4 1816.0,543.4" fill="none" stroke="#3e4b84" stroke-width="0.8"/>
<polyline points="1985.8,446.9 1985.7,451.7 1985.3,456.3 1983.8,460.9 1983.6,465.6 1982.0,470.1 1984.2,474.2 1984.4,478.8 1984.2,483.6 1985.6,487.9 1986.8,492.3 1989.2,496.3 1989.6,500.9 1989.0,505.3 1989.1,509.8 1988.8,514.2 1988.4,518.7 1987.6,523.1 1985.2,527.3 1985.8,531.8" fill="none" stroke="#3e4b84" stroke-width="0.8"/>
<polyline points="2063.0,450.8 2064.3,454.8 2065.7,458.8 2067.2,462.7 2068.5,466.7 2070.6,470.3 2071.8,474.4 2074.5,477.8 2079.2,477.2 2083.5,479.0 2087.8,480.8 2092.4,480.7 2096.9,482.0 2101.5,481.6 2103.6,485.2 2103.8,489.3 2105.5,493.0 2105.8,497.1 2106.9,500.9 2109.4,504.4 2109.3,508.6 2110.0,513.0 2109.9,517.4 2108.2,521.8 2108.6,526.3 2110.2,530.7 2108.5,535.1 2109.3,539.5" fill="none" stroke="#3e4b84" stroke-width="0.8"/>
<polyline points="1556.4,213.0 1554.5,218.0 1552.4,223.0 1554.3,227.1 1556.4,231.0 1555.0,235.6 1555.8,240.4 1555.4,245.1 1557.0,249.1 1558.5,253.2 1560.4,257.1 1563.1,260.2 1564.4,264.1 1566.2,267.8 1568.5,271.1 1572.4,272.5 1576.7,271.4 1580.5,273.1 1585.5,272.6 1590.5,273.1 1594.2,270.9 1598.8,271.5 1602.7,270.0 1606.2,267.2 1610.6,267.1 1615.8,267.3 1620.6,265.1 1624.8,268.2 1630.0,269.1" fill="none" stroke="#3e4b84" stroke-width="0.8"/>
<polyline points="1534.4,245.1 1538.3,243.8 1542.4,243.9 1546.4,243.1 1550.5,243.8 1554.4,245.1" fill="none" stroke="#3e4b84" stroke-width="0.8"/>
<polyline points="1520.3,253.1 1520.1,257.3 1517.9,261.0 1517.7,265.2 1516.3,269.1 1516.7,273.2 1515.5,277.1 1515.1,281.2 1514.8,285.2 1514.3,289.2 1516.4,293.8 1518.9,298.3 1520.3,303.2 1519.9,308.3 1518.3,313.2 1514.7,315.5 1511.9,319.0 1508.3,321.3 1512.1,323.7 1516.0,326.0 1520.3,327.3 1524.9,331.1 1530.4,333.3 1530.4,339.3 1534.5,336.8 1536.6,332.1 1540.4,329.3 1546.4,329.3 1550.6,330.0 1554.2,332.5 1558.4,333.3 1563.2,331.5 1567.5,328.6 1572.5,327.3 1576.3,329.3 1580.1,331.4 1584.2,332.9 1588.8,333.0 1592.5,335.3 1596.5,334.8 1600.5,334.0 1604.5,335.3 1608.5,329.3 1611.9,326.8 1612.8,322.4 1616.2,320.0 1618.3,316.5 1620.6,313.2 1625.4,312.4 1630.0,311.2" fill="none" stroke="#3e4b84" stroke-width="0.8"/>
<polyline points="1492.3,253.1 1496.3,252.4 1500.3,253.2 1504.3,252.8 1508.3,253.1 1512.3,253.4 1516.3,253.4 1520.3,253.1" fill="none" stroke="#3e4b84" stroke-width="0.8"/>
<polyline points="1480.2,271.1 1483.9,267.9 1488.3,265.9 1492.3,263.1 1494.3,257.1" fill="none" stroke="#3e4b84" stroke-width="0.8"/>
<polyline points="1408.1,311.2 1412.2,313.0 1414.8,316.9 1419.6,317.4 1422.5,321.0 1427.0,322.0 1430.1,325.3 1432.6,320.9 1436.1,317.2 1440.0,318.9 1444.2,317.3 1448.1,318.8 1452.2,318.8 1456.2,319.3 1460.1,316.2 1464.2,313.2 1468.2,314.2 1472.4,314.4 1476.0,317.0 1480.2,317.2 1484.2,316.1 1488.2,316.5 1492.3,316.0 1496.3,316.6 1500.3,317.2 1504.4,319.0 1508.3,321.3" fill="none" stroke="#3e4b84" stroke-width="0.8"/>
<polyline points="1400.0,323.3 1404.7,325.2 1409.2,327.7 1414.1,329.3 1417.4,331.7 1421.6,332.5 1425.2,334.2 1428.1,337.3 1429.1,341.2 1430.0,345.2 1430.1,349.3 1433.1,353.4 1436.8,356.7 1440.5,360.1 1444.2,363.4 1445.3,367.4 1446.2,371.5 1448.7,375.1 1449.1,379.4 1450.2,383.4 1454.5,380.6 1459.9,380.4 1464.2,377.4 1467.7,374.4 1472.6,374.1 1475.7,370.4 1480.2,369.4 1483.0,365.6 1484.7,361.1 1487.2,357.2 1490.6,353.8 1492.3,349.3 1496.0,347.1 1500.0,346.2 1504.6,347.3 1508.3,345.3 1512.3,343.3 1515.9,340.3 1520.9,340.4 1524.4,337.3 1530.4,333.3" fill="none" stroke="#3e4b84" stroke-width="0.8"/>
<polyline points="1380.0,367.4 1383.8,365.7 1387.7,364.4 1391.9,364.1 1396.0,363.4 1397.9,367.2 1399.1,371.1 1399.2,375.3 1400.0,379.4 1400.6,383.9 1402.5,387.9 1404.2,392.0 1407.2,395.6 1408.1,400.0" fill="none" stroke="#3e4b84" stroke-width="0.8"/>
<polyline points="1450.2,383.4 1450.4,387.6 1449.1,391.7 1449.0,395.9 1448.2,400.0 1447.3,404.3 1446.5,408.5 1446.2,412.9" fill="none" stroke="#3e4b84" stroke-width="0.8"/>
<polyline points="1492.3,349.3 1494.7,353.1 1497.1,356.9 1497.9,361.5 1500.3,365.4 1504.0,368.1 1505.9,372.3 1509.1,375.5 1512.6,378.4 1514.6,382.6 1518.4,385.2 1520.3,389.4 1524.4,390.0 1528.6,389.9 1532.6,390.8 1536.4,392.4 1540.4,393.4 1544.3,391.4 1546.5,387.3 1550.4,385.4 1555.7,386.7 1560.4,389.4 1563.5,393.2 1566.3,397.3 1570.5,400.0" fill="none" stroke="#3e4b84" stroke-width="0.8"/>
<polyline points="1546.4,329.3 1548.0,333.2 1549.7,337.0 1549.6,341.4 1552.3,345.0 1552.4,349.3 1553.9,353.4 1555.9,357.2 1558.3,360.9 1558.8,365.4 1560.4,369.4 1564.7,369.0 1568.5,370.8 1572.7,370.7 1576.7,371.6 1580.5,373.4 1584.5,372.2 1588.7,372.2 1592.3,369.5 1596.5,369.4 1600.3,367.1 1604.7,366.5 1609.0,365.7 1612.7,363.2 1616.6,361.4 1621.1,362.5 1625.2,365.3 1630.0,365.4" fill="none" stroke="#3e4b84" stroke-width="0.8"/>
<polyline points="1608.5,329.3 1608.5,334.1 1607.1,338.6 1606.5,343.3 1605.1,347.8 1602.9,351.9 1601.2,356.2 1600.9,361.1 1599.3,365.5 1596.5,369.4" fill="none" stroke="#3e4b84" stroke-width="0.8"/>
<polyline points="1580.5,373.4 1582.0,377.3 1582.0,381.4 1583.2,385.3 1583.4,389.5 1584.5,393.4 1587.3,396.9 1590.5,400.0" fill="none" stroke="#3e4b84" stroke-width="0.8"/>
<polyline points="1446.2,412.9 1449.0,416.9 1449.4,422.0 1453.5,425.3 1454.4,430.3 1457.0,434.3 1460.5,437.2 1462.8,441.1 1463.9,445.8 1467.6,448.6 1471.5,450.0 1474.6,453.0 1478.4,454.6 1481.9,456.6 1485.5,458.7 1489.4,460.1 1492.6,462.8 1493.2,467.4 1496.5,471.1 1497.5,475.5 1499.5,479.6 1499.7,484.3 1503.0,486.7 1505.6,489.8 1507.5,493.6 1511.4,495.4 1514.0,498.5 1513.5,503.1 1511.7,507.3 1508.5,511.0 1509.3,516.1 1506.8,520.0 1509.4,523.1 1512.7,525.5 1515.1,528.8 1518.5,531.1 1521.1,534.2" fill="none" stroke="#3e4b84" stroke-width="0.8"/>
<polyline points="1492.6,462.8 1496.7,462.6 1500.8,462.4 1504.9,462.1 1509.0,461.9 1513.0,460.9 1517.2,460.9 1521.1,459.3 1523.9,455.4 1528.2,453.3 1532.5,451.2 1535.6,447.7 1539.6,445.2 1542.5,441.4 1546.5,439.9 1550.7,440.3 1554.7,439.2 1558.9,439.5 1563.0,439.1 1566.9,437.1 1571.1,437.9 1575.3,437.7 1579.4,438.3 1583.4,440.5 1587.5,440.6 1591.8,439.5 1595.8,441.7 1600.0,441.4" fill="none" stroke="#3e4b84" stroke-width="0.8"/>
<polyline points="1542.5,441.4 1541.8,437.3 1541.1,433.1 1540.2,429.0 1539.6,424.8 1538.0,420.9 1537.5,416.7 1535.4,412.9 1537.6,409.0 1541.5,406.7 1545.4,404.5 1547.9,400.9 1551.4,398.4 1553.0,393.8 1556.8,391.5 1560.9,390.4 1564.8,388.8 1569.1,388.5 1573.2,387.6 1576.9,385.1 1581.1,384.6 1585.4,384.3 1589.3,385.6 1592.2,388.9 1596.0,390.3 1600.0,391.5" fill="none" stroke="#3e4b84" stroke-width="0.8"/>
<polyline points="1514.0,498.5 1518.2,498.9 1522.4,499.6 1526.3,501.3 1530.5,501.7 1534.6,502.6 1538.5,504.4 1542.5,505.7 1546.6,506.8 1550.7,506.5 1554.8,506.4 1558.8,505.0 1562.9,505.8 1567.0,505.1 1571.1,505.7 1575.3,505.4 1579.5,505.7 1583.6,506.5 1587.5,508.8 1591.6,509.0 1595.8,509.5 1600.0,509.2" fill="none" stroke="#3e4b84" stroke-width="0.8"/>
<polyline points="1489.0,412.9 1492.1,409.5 1495.5,406.4 1499.5,404.1 1502.7,400.8 1506.8,398.6 1510.9,396.8 1515.4,396.9 1519.9,397.5 1524.1,396.5 1528.3,395.0 1529.4,399.7 1532.5,403.7 1533.5,408.5 1535.4,412.9" fill="none" stroke="#3e4b84" stroke-width="0.8"/>
<polyline points="1570.5,400.0 1574.3,397.7 1577.3,394.5 1578.6,389.8 1581.6,386.7 1585.4,384.3" fill="none" stroke="#3e4b84" stroke-width="0.8"/>
<polyline points="1430.0,215.0 1429.9,219.3 1428.3,223.4 1427.9,227.7 1426.5,231.7 1426.0,236.0 1424.4,239.9 1424.4,244.4 1423.2,248.4 1419.8,251.7 1419.9,256.2 1418.0,260.0" fill="none" stroke="#3e4b84" stroke-width="0.8"/>
<polyline points="941.0,415.0 939.3,419.7 936.2,423.6 934.0,428.0 931.6,431.5 928.5,434.5 926.0,438.0" fill="none" stroke="#3e4b84" stroke-width="0.8"/>
<polyline points="847.0,451.0 849.5,447.5 852.3,444.3 855.8,441.8 858.4,438.4 862.0,436.0 865.6,439.4 867.5,443.9 870.0,448.0 871.0,453.1 873.3,457.6 876.0,462.0" fill="none" stroke="#3e4b84" stroke-width="0.8"/>
<polyline points="926.2,480.5 928.7,484.0 931.0,487.7 932.0,492.0 930.8,496.7 930.0,501.6 928.7,506.3 926.2,510.6 928.7,514.3 929.9,518.9 933.1,522.2" fill="none" stroke="#3e4b84" stroke-width="0.8"/>
<text x="265.1" y="266.7" class="city" stroke="#1f2640" stroke-width="2" paint-order="stroke">Qaqortoq</text>
<circle cx="265.1" cy="271" r="2.5" fill="#ececec" stroke="#141a2e" stroke-width="1"/>
<text x="1034.7" y="278.3" class="city" stroke="#1f2640" stroke-width="2" paint-order="stroke">Bergen</text>
<circle cx="1055.5" cy="281" r="2.5" fill="#ececec" stroke="#141a2e" stroke-width="1"/>
<text x="1138.9" y="290.3" class="city" stroke="#1f2640" stroke-width="2" paint-order="stroke">Oslo</text>
<text x="1283.2" y="309.90000000000003" class="city" stroke="#1f2640" stroke-width="2" paint-order="stroke">Stockholm</text>
<text x="1382" y="298.40000000000003" class="city" stroke="#1f2640" stroke-width="2" paint-order="stroke">Helsinki</text>
<text x="1456.9" y="304.90000000000003" class="city" stroke="#1f2640" stroke-width="2" paint-order="stroke">Saint</text>
<circle cx="1440" cy="294.6" r="2.5" fill="#ececec" stroke="#141a2e" stroke-width="1"/>
<text x="1471.6" y="316.5" class="city" stroke="#1f2640" stroke-width="2" paint-order="stroke">Petersburg</text>
<text x="1157.8" y="357.0" class="city" stroke="#1f2640" stroke-width="2" paint-order="stroke">Gothenburg</text>
<circle cx="1157.8" cy="361.3" r="2.5" fill="#ececec" stroke="#141a2e" stroke-width="1"/>
<text x="1126.1" y="375.90000000000003" class="city" stroke="#1f2640" stroke-width="2" paint-order="stroke">Aalborg</text>
<circle cx="1126.1" cy="380.2" r="2.5" fill="#ececec" stroke="#141a2e" stroke-width="1"/>
<text x="941.6" y="373.6" class="city" stroke="#1f2640" stroke-width="2" paint-order="stroke">Aberdeen</text>
<circle cx="941.7" cy="377.5" r="2.5" fill="#ececec" stroke="#141a2e" stroke-width="1"/>
<text x="924.3" y="406.40000000000003" class="city" stroke="#1f2640" stroke-width="2" paint-order="stroke">Edinburgh</text>
<circle cx="924.6" cy="410.6" r="2.5" fill="#ececec" stroke="#141a2e" stroke-width="1"/>
<text x="882.2" y="442.7" class="city" stroke="#1f2640" stroke-width="2" paint-order="stroke">Belfast</text>
<circle cx="882.7" cy="447.4" r="2.5" fill="#ececec" stroke="#141a2e" stroke-width="1"/>
<text x="1160.5" y="497.1" class="city" stroke="#1f2640" stroke-width="2" paint-order="stroke">Berlin</text>
<text x="947.4" y="536.5" class="city" stroke="#1f2640" stroke-width="2" paint-order="stroke">London</text>
<text x="1578.5" y="412.2" class="city" stroke="#1f2640" stroke-width="2" paint-order="stroke">Moscow</text>
<text x="1526.4" y="381.3" class="city" stroke="#1f2640" stroke-width="2" paint-order="stroke">Tver</text>
<circle cx="1526.4" cy="385.4" r="2.5" fill="#ececec" stroke="#141a2e" stroke-width="1"/>
<text x="1585.5" y="359.3" class="city" stroke="#1f2640" stroke-width="2" paint-order="stroke">Yaroslavl</text>
<circle cx="1587.5" cy="363.8" r="2.5" fill="#ececec" stroke="#141a2e" stroke-width="1"/>
<text x="1575.8" y="517.5999999999999" class="city" stroke="#1f2640" stroke-width="2" paint-order="stroke">Voronezh</text>
<circle cx="1576.9" cy="522.7" r="2.5" fill="#ececec" stroke="#141a2e" stroke-width="1"/>
<text x="1429.1" y="546.5" class="city" stroke="#1f2640" stroke-width="2" paint-order="stroke">Kyiv</text>
<text x="1738.4" y="331.0" class="city" stroke="#1f2640" stroke-width="2" paint-order="stroke">Kirov</text>
<circle cx="1738.4" cy="335" r="2.5" fill="#ececec" stroke="#141a2e" stroke-width="1"/>
<text x="1839.4" y="347.8" class="city" stroke="#1f2640" stroke-width="2" paint-order="stroke">Perm</text>
<circle cx="1839.4" cy="352.7" r="2.5" fill="#ececec" stroke="#141a2e" stroke-width="1"/>
<text x="1651.4" y="383.7" class="city" stroke="#1f2640" stroke-width="2" paint-order="stroke">Nizhny</text>
<text x="1651.4" y="395.3" class="city" stroke="#1f2640" stroke-width="2" paint-order="stroke">Novgorod</text>
<circle cx="1651.4" cy="400.2" r="2.5" fill="#ececec" stroke="#141a2e" stroke-width="1"/>
<text x="1793" y="381.0" class="city" stroke="#1f2640" stroke-width="2" paint-order="stroke">Izhevsk</text>
<circle cx="1793" cy="385.2" r="2.5" fill="#ececec" stroke="#141a2e" stroke-width="1"/>
<text x="1729.7" y="410.6" class="city" stroke="#1f2640" stroke-width="2" paint-order="stroke">Kazan</text>
<circle cx="1729.7" cy="415.2" r="2.5" fill="#ececec" stroke="#141a2e" stroke-width="1"/>
<text x="1834.6" y="439.0" class="city" stroke="#1f2640" stroke-width="2" paint-order="stroke">Ufa</text>
<circle cx="1834.6" cy="443.7" r="2.5" fill="#ececec" stroke="#141a2e" stroke-width="1"/>
<text x="1719.2" y="450.40000000000003" class="city" stroke="#1f2640" stroke-width="2" paint-order="stroke">Ulyanovsk</text>
<circle cx="1718.6" cy="454.8" r="2.5" fill="#ececec" stroke="#141a2e" stroke-width="1"/>
<text x="1745" y="479.1" class="city" stroke="#1f2640" stroke-width="2" paint-order="stroke">Samara</text>
<circle cx="1745" cy="483.8" r="2.5" fill="#ececec" stroke="#141a2e" stroke-width="1"/>
<text x="1666.7" y="479.7" class="city" stroke="#1f2640" stroke-width="2" paint-order="stroke">Penza</text>
<circle cx="1666.7" cy="483.8" r="2.5" fill="#ececec" stroke="#141a2e" stroke-width="1"/>
<text x="1822" y="515.5" class="city" stroke="#1f2640" stroke-width="2" paint-order="stroke">Orenburg</text>
<circle cx="1822" cy="519.6" r="2.5" fill="#ececec" stroke="#141a2e" stroke-width="1"/>
<text x="1682.3" y="521.5999999999999" class="city" stroke="#1f2640" stroke-width="2" paint-order="stroke">Saratov</text>
<circle cx="1682.3" cy="526" r="2.5" fill="#ececec" stroke="#141a2e" stroke-width="1"/>
<text x="1906.7" y="381.3" class="city" stroke="#1f2640" stroke-width="2" paint-order="stroke">Yekaterinburg</text>
<circle cx="1906.7" cy="386.3" r="2.5" fill="#ececec" stroke="#141a2e" stroke-width="1"/>
<text x="1982.3" y="372.8" class="city" stroke="#1f2640" stroke-width="2" paint-order="stroke">Tyumen</text>
<circle cx="1982.3" cy="377.5" r="2.5" fill="#ececec" stroke="#141a2e" stroke-width="1"/>
<text x="1918.7" y="427.2" class="city" stroke="#1f2640" stroke-width="2" paint-order="stroke">Chelyabinsk</text>
<circle cx="1918.7" cy="432.3" r="2.5" fill="#ececec" stroke="#141a2e" stroke-width="1"/>
<text x="2037.9" y="436.1" class="city" stroke="#1f2640" stroke-width="2" paint-order="stroke">Petropavl</text>
<circle cx="2037.9" cy="440.3" r="2.5" fill="#ececec" stroke="#141a2e" stroke-width="1"/>
<text x="2102.7" y="431.8" class="city" stroke="#1f2640" stroke-width="2" paint-order="stroke">Omsk</text>
<circle cx="2102.7" cy="436.9" r="2.5" fill="#ececec" stroke="#141a2e" stroke-width="1"/>
<text x="2281.3" y="391.7" class="city" stroke="#1f2640" stroke-width="2" paint-order="stroke">Tomsk</text>
<circle cx="2281.3" cy="396" r="2.5" fill="#ececec" stroke="#141a2e" stroke-width="1"/>
<text x="2250" y="430.7" class="city" stroke="#1f2640" stroke-width="2" paint-order="stroke">Novosibirsk</text>
<circle cx="2250" cy="435.7" r="2.5" fill="#ececec" stroke="#141a2e" stroke-width="1"/>
<text x="2263.2" y="475.40000000000003" class="city" stroke="#1f2640" stroke-width="2" paint-order="stroke">Barnaul</text>
<circle cx="2263.2" cy="480.1" r="2.5" fill="#ececec" stroke="#141a2e" stroke-width="1"/>
<text x="2157.9" y="502.40000000000003" class="city" stroke="#1f2640" stroke-width="2" paint-order="stroke">Pavlodar</text>
<circle cx="2157.9" cy="507.1" r="2.5" fill="#ececec" stroke="#141a2e" stroke-width="1"/>
<text x="2073" y="530.1999999999999" class="city" stroke="#1f2640" stroke-width="2" paint-order="stroke">Astana</text>
<text x="2103" y="249.3" class="city" stroke="#1f2640" stroke-width="2" paint-order="stroke">Surgut</text>
<circle cx="2103" cy="254" r="2.5" fill="#ececec" stroke="#141a2e" stroke-width="1"/>
<text x="2390" y="404.0" class="city" stroke="#1f2640" stroke-width="2" paint-order="stroke">Krasn</text>
<text x="2385" y="465.8" class="city" stroke="#1f2640" stroke-width="2" paint-order="stroke">Abakan</text>
<text x="2035.2" y="247.6" class="city sm" stroke="#1f2640" stroke-width="2" paint-order="stroke">Khanty-</text>
<text x="2036" y="257.2" class="city sm" stroke="#1f2640" stroke-width="2" paint-order="stroke">Mansiysk</text>
<circle cx="2036" cy="261.7" r="2.5" fill="#ececec" stroke="#141a2e" stroke-width="1"/>
<circle cx="1138.9" cy="295.7" r="3.2" fill="#e8e8e8" stroke="#1f2640" stroke-width="0.8"/><circle cx="1138.9" cy="295.7" r="1.9" fill="none" stroke="#3a3f55" stroke-width="0.9"/>
<circle cx="1251.6" cy="313.9" r="3.2" fill="#e8e8e8" stroke="#1f2640" stroke-width="0.8"/><circle cx="1251.6" cy="313.9" r="1.9" fill="none" stroke="#3a3f55" stroke-width="0.9"/>
<circle cx="1179.7" cy="501" r="3.2" fill="#e8e8e8" stroke="#1f2640" stroke-width="0.8"/><circle cx="1179.7" cy="501" r="1.9" fill="none" stroke="#3a3f55" stroke-width="0.9"/>
<circle cx="971.3" cy="526.3" r="3.2" fill="#e8e8e8" stroke="#1f2640" stroke-width="0.8"/><circle cx="971.3" cy="526.3" r="1.9" fill="none" stroke="#3a3f55" stroke-width="0.9"/>
<circle cx="1552.6" cy="416.1" r="3.2" fill="#e8e8e8" stroke="#1f2640" stroke-width="0.8"/><circle cx="1552.6" cy="416.1" r="1.9" fill="none" stroke="#3a3f55" stroke-width="0.9"/>
<circle cx="2073" cy="535.6" r="3.2" fill="#e8e8e8" stroke="#1f2640" stroke-width="0.8"/><circle cx="2073" cy="535.6" r="1.9" fill="none" stroke="#3a3f55" stroke-width="0.9"/>
<text x="1108.8" y="257.98" class="ctry" font-size="13" stroke="#20284a" stroke-width="1.5" paint-order="stroke">Norway</text>
<text x="1370.4" y="333.44" class="ctry" font-size="11.5" stroke="#20284a" stroke-width="1.5" paint-order="stroke">Estonia</text>
<text x="1356.5" y="386.34" class="ctry" font-size="11.5" stroke="#20284a" stroke-width="1.5" paint-order="stroke">Latvia</text>
<text x="1128.4" y="414.28000000000003" class="ctry" font-size="13" stroke="#20284a" stroke-width="1.5" paint-order="stroke">Denmark</text>
<text x="1342.3" y="427.06" class="ctry" font-size="11" stroke="#20284a" stroke-width="1.5" paint-order="stroke">Lithuania</text>
<text x="937.4" y="453.98" class="ctry" font-size="13" stroke="#20284a" stroke-width="1.5" paint-order="stroke">United</text>
<text x="937.4" y="467.48" class="ctry" font-size="13" stroke="#20284a" stroke-width="1.5" paint-order="stroke">Kingdom</text>
<text x="854.4" y="484.88" class="ctry" font-size="13" stroke="#20284a" stroke-width="1.5" paint-order="stroke">Ireland</text>
<text x="1405.6" y="479.08" class="ctry" font-size="13" stroke="#20284a" stroke-width="1.5" paint-order="stroke">Belarus</text>
<text x="1060.5" y="518.34" class="ctry" font-size="11.5" stroke="#20284a" stroke-width="1.5" paint-order="stroke">Netherlands</text>
<text x="1270.9" y="514.5799999999999" class="ctry" font-size="13" stroke="#20284a" stroke-width="1.5" paint-order="stroke">Poland</text>
<text x="1128.4" y="539.68" class="ctry" font-size="13" stroke="#20284a" stroke-width="1.5" paint-order="stroke">Germany</text>
<text x="911.2" y="391.3" class="reg">SCOT.</text>
<text x="918.5" y="507.9" class="reg">WALES</text>
<text x="963.3" y="507.1" class="reg">ENG.</text>
<text x="50.2" y="498.3" class="reg">N.L.</text>
<text x="1021.9" y="396.5" class="sea">North</text><text x="1021.9" y="409.3" class="sea">Sea</text>
<text transform="translate(139,388) rotate(51)" x="0" y="4" class="sea big">Labrador Sea</text>
<text transform="translate(118,218) rotate(90)" x="0" y="4" class="sea big">it</text>
<text x="1335.7" y="227.5" class="mk" stroke="#222838" stroke-width="2" paint-order="stroke">Headquarters FIN</text>
<circle cx="1335.9" cy="246.1" r="10" fill="none" stroke="#4cd38e" stroke-width="1.5"/><circle cx="1335.9" cy="246.1" r="8.3" fill="#4cd38e" stroke="#232845" stroke-width="1.2"/>
<text x="1357.3" y="268.0" class="mk" stroke="#222838" stroke-width="2" paint-order="stroke">Helsinki site</text>
<circle cx="1356.9" cy="286.7" r="10" fill="none" stroke="#4cd38e" stroke-width="1.5"/><circle cx="1356.9" cy="286.7" r="8.3" fill="#4cd38e" stroke="#232845" stroke-width="1.2"/>
<text x="1052.8" y="493.8" class="mk" stroke="#222838" stroke-width="2" paint-order="stroke">Netherlands site</text>
<circle cx="1052.8" cy="512.6" r="10" fill="none" stroke="#4cd38e" stroke-width="1.5"/><circle cx="1052.8" cy="512.6" r="8.3" fill="#4cd38e" stroke="#232845" stroke-width="1.2"/>
</g>
<circle cx="30.7" cy="503.8" r="10" fill="#fff"/><circle cx="30.7" cy="503.8" r="6.6" fill="#111"/><rect x="29.6" y="502.3" width="2.2" height="5.2" fill="#fff"/><circle cx="30.7" cy="499.8" r="1.2" fill="#fff"/>
<circle cx="27.3" cy="531" r="7" fill="#fff" opacity="0.92"/><circle cx="27.3" cy="531" r="4.5" fill="#333"/><path d="M25.5 533 L25.8 530 L28.5 528.8 L29 531.5 Z" fill="#fff"/>
<text x="38.4" y="535.5" font-size="13.5" font-weight="bold" fill="#fff" font-family="Liberation Sans, sans-serif">mapbox</text>
<circle cx="2367.5" cy="437.4" r="16.5" fill="#fff"/>
<g stroke="#000" stroke-width="2.6" fill="none" stroke-linecap="square" stroke-linejoin="miter"><path d="M2369.6 436.2 L2377.2 428.6"/><path d="M2371.6 428.6 L2377.2 428.6 L2377.2 434.2"/><path d="M2365.4 440.4 L2358 447.8"/><path d="M2358 442.2 L2358 447.8 L2363.6 447.8"/></g>
<circle cx="2367.5" cy="477.4" r="16.5" fill="#6c6cf5"/><path d="M2359 477.8 H2377 M2367.8 469.7 V488" stroke="#fff" stroke-width="1.7"/>
<circle cx="2367.5" cy="517.6" r="16.5" fill="#6c6cf5"/><path d="M2359 518.6 H2377" stroke="#fff" stroke-width="1.8"/>
</svg>

<div class="tab" style="left:12px;color:#fff">ALL (3)</div>
<div class="tab" style="left:76px;color:#7b6cf6">ACTIVE ALERTS (1)</div>

<div class="th" style="left:19px;font-weight:bold">Site name</div>
<svg class="chev" style="left:83px;top:631px" width="12" height="16" viewBox="0 0 12 16"><path d="M6 1 V14 M2 10 L6 14 L10 10" fill="none" stroke="#a9abd0" stroke-width="1.5"/></svg>
<div class="th" style="left:349px">Region</div>
<div class="th" style="left:678px">Notifications</div>
<div class="th" style="left:1033px">Alerts</div>
<div class="th" style="left:1363px">Task descriptions</div>
<div class="th" style="left:1693px">Overall score</div>
<div class="th" style="left:2048px">Phase</div>
<div class="hr" style="top:666px"></div>
<div class="hr" style="top:746px"></div>
<div class="hr" style="top:825px"></div>
<div class="hr" style="top:904px"></div>

<div class="td" style="left:19px;top:697px">Headquarters FIN</div>
<div class="td" style="left:349px;top:697px">Southeast division</div>
<div class="td" style="left:678px;top:697px">1888</div>
<div class="td" style="left:1033px;top:697px">1403</div>
<div class="td" style="left:1363px;top:697px">0</div>
<div class="stars" style="left:1692.3px;top:697px"><svg width="16" height="16" viewBox="0 0 24 24" style="margin-right:1.8px"><path d="M12.00 3.60 L14.70 9.08 L20.75 9.96 L16.37 14.22 L17.41 20.24 L12.00 17.40 L6.59 20.24 L7.63 14.22 L3.25 9.96 L9.30 9.08Z" fill="#4cd38e" stroke="#4cd38e" stroke-width="2.2" stroke-linejoin="round"/></svg><svg width="16" height="16" viewBox="0 0 24 24" style="margin-right:1.8px"><path d="M12.00 3.60 L14.70 9.08 L20.75 9.96 L16.37 14.22 L17.41 20.24 L12.00 17.40 L6.59 20.24 L7.63 14.22 L3.25 9.96 L9.30 9.08Z" fill="#4cd38e" stroke="#4cd38e" stroke-width="2.2" stroke-linejoin="round"/></svg><svg width="16" height="16" viewBox="0 0 24 24" style="margin-right:1.8px"><path d="M12.00 3.60 L14.70 9.08 L20.75 9.96 L16.37 14.22 L17.41 20.24 L12.00 17.40 L6.59 20.24 L7.63 14.22 L3.25 9.96 L9.30 9.08Z" fill="#4cd38e" stroke="#4cd38e" stroke-width="2.2" stroke-linejoin="round"/></svg><svg width="16" height="16" viewBox="0 0 24 24" style="margin-right:1.8px"><path d="M12.00 3.60 L14.70 9.08 L20.75 9.96 L16.37 14.22 L17.41 20.24 L12.00 17.40 L6.59 20.24 L7.63 14.22 L3.25 9.96 L9.30 9.08Z" fill="#4cd38e" stroke="#4cd38e" stroke-width="2.2" stroke-linejoin="round"/></svg><svg width="16" height="16" viewBox="0 0 24 24" style="margin-right:1.8px"><path d="M12.00 3.60 L14.70 9.08 L20.75 9.96 L16.37 14.22 L17.41 20.24 L12.00 17.40 L6.59 20.24 L7.63 14.22 L3.25 9.96 L9.30 9.08Z" fill="#4cd38e" stroke="#4cd38e" stroke-width="2.2" stroke-linejoin="round"/></svg></div>
<div class="td" style="left:2065px;top:695px">Active</div>
<svg class="chev" style="left:2362px;top:701px" width="16" height="10" viewBox="0 0 16 10"><path d="M2.5 2.5 L8 8 L13.5 2.5" fill="none" stroke="#fff" stroke-width="1.6"/></svg>
<div class="td" style="left:19px;top:777px">Helsinki site</div>
<div class="td" style="left:349px;top:777px">Southwest division</div>
<div class="td" style="left:678px;top:777px">262</div>
<div class="td" style="left:1033px;top:777px">0</div>
<div class="td" style="left:1363px;top:777px">0</div>
<div class="stars" style="left:1692.3px;top:777px"><svg width="16" height="16" viewBox="0 0 24 24" style="margin-right:1.8px"><path d="M12.00 3.60 L14.70 9.08 L20.75 9.96 L16.37 14.22 L17.41 20.24 L12.00 17.40 L6.59 20.24 L7.63 14.22 L3.25 9.96 L9.30 9.08Z" fill="#4cd38e" stroke="#4cd38e" stroke-width="2.2" stroke-linejoin="round"/></svg><svg width="16" height="16" viewBox="0 0 24 24" style="margin-right:1.8px"><path d="M12.00 3.60 L14.70 9.08 L20.75 9.96 L16.37 14.22 L17.41 20.24 L12.00 17.40 L6.59 20.24 L7.63 14.22 L3.25 9.96 L9.30 9.08Z" fill="#4cd38e" stroke="#4cd38e" stroke-width="2.2" stroke-linejoin="round"/></svg><svg width="16" height="16" viewBox="0 0 24 24" style="margin-right:1.8px"><path d="M12.00 3.60 L14.70 9.08 L20.75 9.96 L16.37 14.22 L17.41 20.24 L12.00 17.40 L6.59 20.24 L7.63 14.22 L3.25 9.96 L9.30 9.08Z" fill="#4cd38e" stroke="#4cd38e" stroke-width="2.2" stroke-linejoin="round"/></svg><svg width="16" height="16" viewBox="0 0 24 24" style="margin-right:1.8px"><path d="M12.00 3.60 L14.70 9.08 L20.75 9.96 L16.37 14.22 L17.41 20.24 L12.00 17.40 L6.59 20.24 L7.63 14.22 L3.25 9.96 L9.30 9.08Z" fill="#4cd38e" stroke="#4cd38e" stroke-width="2.2" stroke-linejoin="round"/></svg><svg width="16" height="16" viewBox="0 0 24 24" style="margin-right:1.8px"><path d="M12.00 3.60 L14.70 9.08 L20.75 9.96 L16.37 14.22 L17.41 20.24 L12.00 17.40 L6.59 20.24 L7.63 14.22 L3.25 9.96 L9.30 9.08Z" fill="#4cd38e" stroke="#4cd38e" stroke-width="2.2" stroke-linejoin="round"/></svg></div>
<div class="td" style="left:2065px;top:775px">Active</div>
<svg class="chev" style="left:2362px;top:781px" width="16" height="10" viewBox="0 0 16 10"><path d="M2.5 2.5 L8 8 L13.5 2.5" fill="none" stroke="#fff" stroke-width="1.6"/></svg>
<div class="td" style="left:19px;top:856px">Netherlands site</div>
<div class="td" style="left:349px;top:856px">—</div>
<div class="td" style="left:678px;top:856px">0</div>
<div class="td" style="left:1033px;top:856px">0</div>
<div class="td" style="left:1363px;top:856px">0</div>
<div class="stars" style="left:1692.3px;top:856px"><svg width="16" height="16" viewBox="0 0 24 24" style="margin-right:1.8px"><path d="M12.00 3.60 L14.70 9.08 L20.75 9.96 L16.37 14.22 L17.41 20.24 L12.00 17.40 L6.59 20.24 L7.63 14.22 L3.25 9.96 L9.30 9.08Z" fill="#4cd38e" stroke="#4cd38e" stroke-width="2.2" stroke-linejoin="round"/></svg><svg width="16" height="16" viewBox="0 0 24 24" style="margin-right:1.8px"><path d="M12.00 3.60 L14.70 9.08 L20.75 9.96 L16.37 14.22 L17.41 20.24 L12.00 17.40 L6.59 20.24 L7.63 14.22 L3.25 9.96 L9.30 9.08Z" fill="#4cd38e" stroke="#4cd38e" stroke-width="2.2" stroke-linejoin="round"/></svg><svg width="16" height="16" viewBox="0 0 24 24" style="margin-right:1.8px"><path d="M12.00 3.60 L14.70 9.08 L20.75 9.96 L16.37 14.22 L17.41 20.24 L12.00 17.40 L6.59 20.24 L7.63 14.22 L3.25 9.96 L9.30 9.08Z" fill="#4cd38e" stroke="#4cd38e" stroke-width="2.2" stroke-linejoin="round"/></svg><svg width="16" height="16" viewBox="0 0 24 24" style="margin-right:1.8px"><path d="M12.00 3.60 L14.70 9.08 L20.75 9.96 L16.37 14.22 L17.41 20.24 L12.00 17.40 L6.59 20.24 L7.63 14.22 L3.25 9.96 L9.30 9.08Z" fill="#4cd38e" stroke="#4cd38e" stroke-width="2.2" stroke-linejoin="round"/></svg><svg width="16" height="16" viewBox="0 0 24 24" style="margin-right:1.8px"><path d="M12.00 3.60 L14.70 9.08 L20.75 9.96 L16.37 14.22 L17.41 20.24 L12.00 17.40 L6.59 20.24 L7.63 14.22 L3.25 9.96 L9.30 9.08Z" fill="#4cd38e" stroke="#4cd38e" stroke-width="2.2" stroke-linejoin="round"/></svg></div>
<div class="td" style="left:2065px;top:854px">Active</div>
<svg class="chev" style="left:2362px;top:860px" width="16" height="10" viewBox="0 0 16 10"><path d="M2.5 2.5 L8 8 L13.5 2.5" fill="none" stroke="#fff" stroke-width="1.6"/></svg>
</body></html>
